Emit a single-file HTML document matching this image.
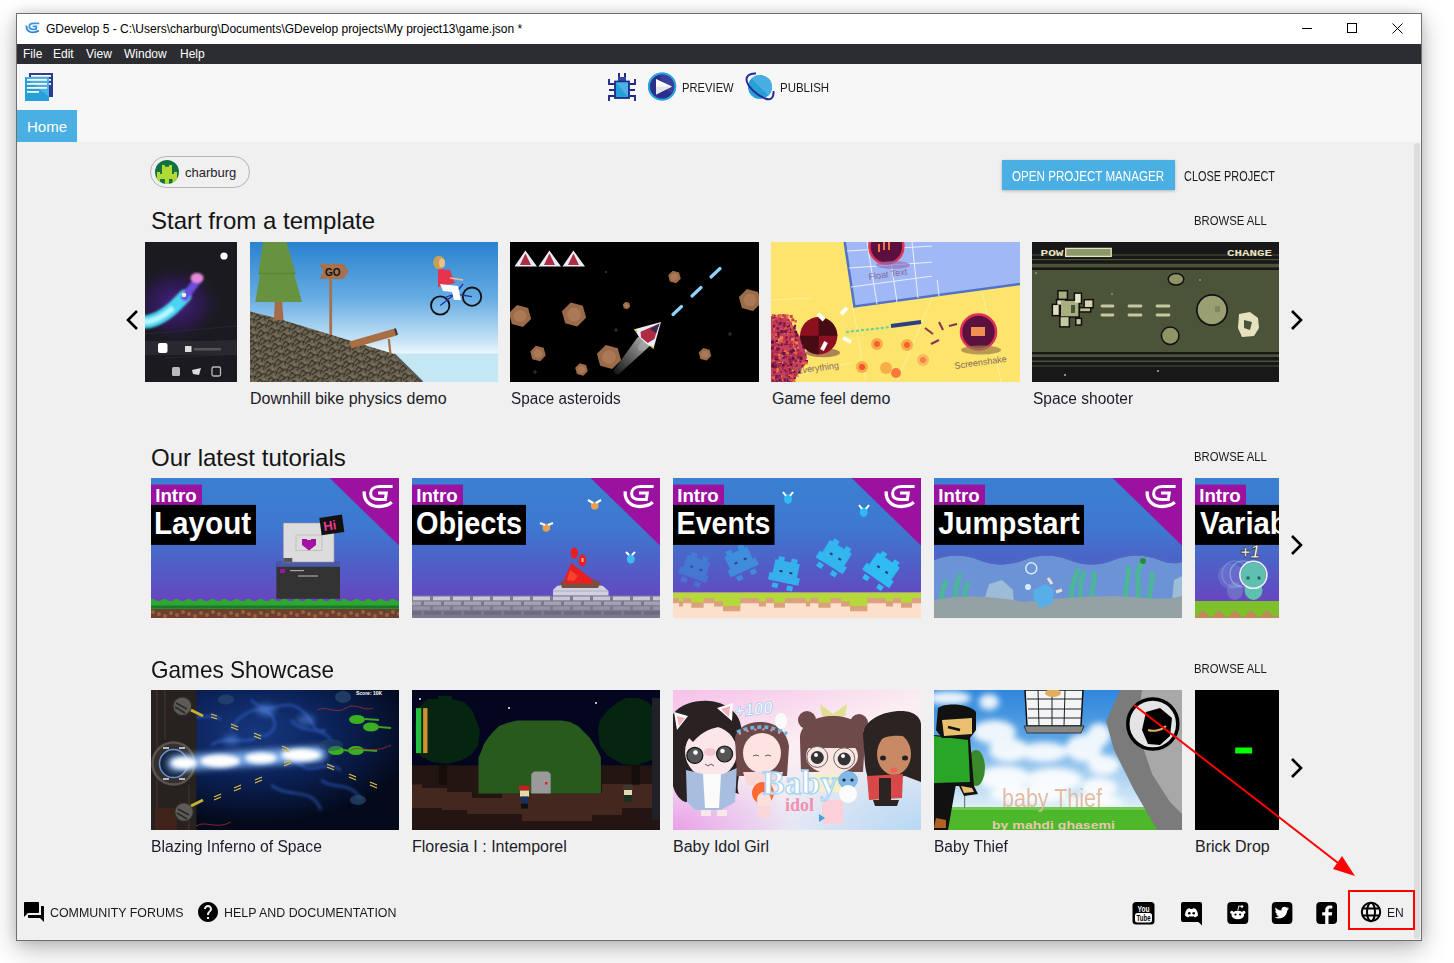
<!DOCTYPE html>
<html><head><meta charset="utf-8">
<style>
*{box-sizing:border-box}
html,body{margin:0;padding:0}
body{width:1454px;height:963px;overflow:hidden;background:#fff;position:relative;font-family:"Liberation Sans",sans-serif;color:#1e1e1e}
.a{position:absolute}
.t{position:absolute;white-space:nowrap;line-height:1}
#win{left:16px;top:13px;width:1406px;height:928px;border:1px solid #707070;background:#f0f0f0;box-shadow:0 8px 24px rgba(0,0,0,0.28),0 0 10px rgba(0,0,0,0.12)}
.card{position:absolute;width:249px;height:140px;overflow:hidden}
.card svg{display:block}
.lbl{position:absolute;font-size:16px;color:#1c1c28;white-space:nowrap;line-height:1}
.h2{position:absolute;font-size:24px;color:#141414;white-space:nowrap;line-height:1}
.ba{position:absolute;font-size:13px;color:#1a1a1a;white-space:nowrap;line-height:1;transform-origin:0 0}
.chev{position:absolute;width:14px;height:20px}
</style></head><body>
<div id="win" class="a"></div>
<!-- title bar -->
<div class="a" style="left:17px;top:14px;width:1404px;height:30px;background:#fff"></div>
<div class="a" style="left:17px;top:44px;width:1404px;height:20px;background:#2b2d31"></div>
<div class="a" style="left:17px;top:64px;width:1404px;height:78px;background:#f7f7f7"></div>

<!-- title -->
<svg class="a" style="left:0;top:0" width="60" height="60" viewBox="0 0 60 60"><g transform="translate(-69.5 19.6) scale(0.45)">
<path d="M213.2 13.3 C212.5 22.5 218.5 28.5 228 28.5 C233.5 28.5 237.5 27 240.8 24.3" fill="none" stroke="#2f86dc" stroke-width="4.2"/>
<path d="M241.6 8.6 H228.5 C222.5 8.6 219.6 12 219.6 15.6 C219.6 19.6 222.6 21.6 228 21.6 H234.3 L235.3 14.9 H227" fill="none" stroke="#3b93e0" stroke-width="4"/></g></svg>
<div class="t" style="left:46px;top:23px;font-size:12px;color:#000">GDevelop 5 - C:\Users\charburg\Documents\GDevelop projects\My project13\game.json *</div>
<div class="a" style="left:1302px;top:28px;width:10px;height:1px;background:#000"></div>
<div class="a" style="left:1347px;top:23px;width:10px;height:10px;border:1px solid #000"></div>
<svg class="a" style="left:1392px;top:23px" width="11" height="11" viewBox="0 0 11 11"><path d="M0.5 0.5 L10.5 10.5 M10.5 0.5 L0.5 10.5" stroke="#000" stroke-width="1"/></svg>
<!-- menu -->
<div class="t" style="left:23px;top:48px;font-size:12px;color:#fff">File</div>
<div class="t" style="left:53px;top:48px;font-size:12px;color:#fff">Edit</div>
<div class="t" style="left:86px;top:48px;font-size:12px;color:#fff">View</div>
<div class="t" style="left:124px;top:48px;font-size:12px;color:#fff">Window</div>
<div class="t" style="left:180px;top:48px;font-size:12px;color:#fff">Help</div>

<!-- toolbar -->
<svg class="a" style="left:24px;top:72px" width="30" height="30" viewBox="0 0 30 30">
<rect x="5" y="1" width="24" height="24" fill="#2e3b93"/>
<rect x="7" y="3" width="20" height="1.8" fill="#fff"/><rect x="7" y="7" width="20" height="1.8" fill="#fff"/><rect x="7" y="11" width="20" height="1.8" fill="#fff"/>
<rect x="1" y="5" width="24" height="24" fill="#26a0d8"/>
<path d="M1 5 H25 V25 Z" fill="#45b2e6"/>
<rect x="3" y="7" width="20" height="1.8" fill="#fdf6ee"/><rect x="3" y="11" width="20" height="1.8" fill="#fdf6ee"/><rect x="3" y="15" width="20" height="1.8" fill="#fdf6ee"/><rect x="3" y="19" width="12" height="1.8" fill="#fdf6ee"/>
</svg>
<svg class="a" style="left:604px;top:68px" width="36" height="36" viewBox="604 68 36 36">
<path d="M619 73 V78 M625 73 V78" stroke="#232c8a" stroke-width="2"/>
<rect x="618" y="77" width="8" height="4.5" fill="#3a46a0"/>
<rect x="615" y="81.5" width="14" height="16.5" fill="#25a0d8" stroke="#1f2a88" stroke-width="1.8"/>
<path d="M616 82.4 H628 V97 Z" fill="#4bb1e4"/>
<path d="M609 79 V84 H614.5 M609 90 H614.5 M609 101 V96 H614.5 M635 79 V84 H629.5 M635 90 H629.5 M635 101 V96 H629.5" fill="none" stroke="#1f2a88" stroke-width="1.9"/>
</svg>
<svg class="a" style="left:646px;top:70px" width="32" height="32" viewBox="646 70 32 32">
<circle cx="662.1" cy="86.5" r="13.2" fill="#2b2f8c" stroke="#2ba3de" stroke-width="1.8"/>
<path d="M660 74.5 A12 12 0 0 1 672 94 L662 86 Z" fill="#3a3e9c"/>
<circle cx="662.1" cy="86.5" r="13.2" fill="none" stroke="#2ba3de" stroke-width="1.8"/>
<path d="M656 79 L672 86.6 L656 94.4 Z" fill="#fff"/>
<path d="M656 86.6 L672 86.6 L656 94.4 Z" fill="#e4e4e4"/>
</svg>
<div class="t" style="left:682px;top:81px;font-size:13.5px;color:#1a1a1a;transform:scaleX(0.83);transform-origin:0 0">PREVIEW</div>
<svg class="a" style="left:740px;top:68px" width="40" height="36" viewBox="740 68 40 36">
<circle cx="760" cy="87" r="12" fill="#27a0d6"/>
<path d="M751.5 78.5 A12 12 0 0 1 768.5 95.5 Z" fill="#4aaee3"/>
<path d="M756 73.5 C750 73 745 76 747 82 C749 88 757 95 765 98.5 C770 100.5 774 99 773.5 91" fill="none" stroke="#25289a" stroke-width="1.9"/>
</svg>
<div class="t" style="left:780px;top:81px;font-size:13.5px;color:#1a1a1a;transform:scaleX(0.85);transform-origin:0 0">PUBLISH</div>
<!-- home tab -->
<div class="a" style="left:17px;top:110px;width:60px;height:32px;background:#4aafe3"></div>
<div class="t" style="left:27px;top:119px;font-size:15px;color:#fff">Home</div>
<!-- scrollbar thumb -->
<div class="a" style="left:1414px;top:143px;width:6px;height:795.5px;background:#dddddd;border-radius:3px"></div>

<!-- user chip -->
<div class="a" style="left:150px;top:156px;width:100px;height:32px;border:1px solid #b4b4b4;border-radius:16px"></div>
<svg class="a" style="left:155px;top:160px" width="24" height="24" viewBox="0 0 24 24"><defs><clipPath id="avc"><circle cx="12" cy="12" r="12"/></clipPath></defs>
<circle cx="12" cy="12" r="12" fill="#137244"/>
<path clip-path="url(#avc)" d="M7 5.1 H9.9 V6.7 H14 V5.1 H17 V14 H19 V12 H22 V24 H17.5 V19.1 H14 V24 H9.9 V19.1 H5.1 V24 H2 V12 H5.1 V14 H7 Z" fill="#b3d935"/>
</svg>
<div class="t" style="left:185px;top:166px;font-size:13px;color:#1e1e2a">charburg</div>
<!-- buttons -->
<div class="a" style="left:1002px;top:160px;width:173px;height:30px;background:#4aafe3;box-shadow:0 1px 3px rgba(0,0,0,0.25)"></div>
<div class="t" style="left:1012px;top:169px;font-size:14px;color:#fff;transform:scaleX(0.83);transform-origin:0 0">OPEN PROJECT MANAGER</div>
<div class="t" style="left:1184px;top:169px;font-size:14px;color:#1a1a1a;transform:scaleX(0.78);transform-origin:0 0">CLOSE PROJECT</div>
<!-- headings -->
<div class="h2" style="left:151px;top:209px">Start from a template</div>
<div class="ba" style="left:1194px;top:214px;transform:scaleX(0.87)">BROWSE ALL</div>
<div class="h2" style="left:151px;top:446px">Our latest tutorials</div>
<div class="ba" style="left:1194px;top:450px;transform:scaleX(0.87)">BROWSE ALL</div>
<div class="h2" style="left:151px;top:658px;transform:scaleX(0.94);transform-origin:0 0">Games Showcase</div>
<div class="ba" style="left:1194px;top:662px;transform:scaleX(0.87)">BROWSE ALL</div>
<!--CARDS-->
<svg class="a" style="left:145px;top:242px;background:#000" width="92" height="140" viewBox="0 0 92 140"><defs><radialGradient id="pglow" cx="0.5" cy="0.5" r="0.5"><stop offset="0" stop-color="#4a2290" stop-opacity="0.95"/><stop offset="0.6" stop-color="#33185e" stop-opacity="0.6"/><stop offset="1" stop-color="#1c1b22" stop-opacity="0"/></radialGradient>
<filter id="pb" filterUnits="userSpaceOnUse" x="-10" y="-10" width="120" height="160"><feGaussianBlur stdDeviation="1.3"/></filter></defs>
<rect width="92" height="140" fill="#1b1a21"/>
<ellipse cx="30" cy="62" rx="48" ry="40" fill="url(#pglow)"/>
<path d="M0 92 L92 84 M0 104 L92 98 M20 116 L92 112" stroke="#2e2d36" stroke-width="0.7"/>
<g filter="url(#pb)">
<path d="M-2 80 C10 80 20 73 28 66 C32 62 36 58 40 54" fill="none" stroke="#48d6f2" stroke-width="13" stroke-linecap="round"/>
<path d="M-2 80 C10 80 20 73 28 66" fill="none" stroke="#b8f6ff" stroke-width="5"/>
<path d="M40 55 C45 48 49 42 54 37" fill="none" stroke="#6c4ee0" stroke-width="8" stroke-linecap="round"/>
<ellipse cx="52" cy="36" rx="6.5" ry="5" fill="#e888d8"/>
</g>
<circle cx="39" cy="53" r="2.3" fill="#eee"/>
<circle cx="79" cy="14" r="3.6" fill="#fff"/>
<rect x="0" y="99" width="92" height="14" fill="#2b2b33" opacity="0.85"/>
<rect x="13" y="101" width="9.5" height="10" rx="2" fill="#fff"/>
<rect x="40" y="104" width="6.5" height="6" fill="#ddd"/>
<rect x="49" y="106" width="27" height="2.5" fill="#555"/>
<rect x="27" y="125" width="8" height="9" rx="1.5" fill="#bbb"/>
<path d="M47 128 L56 126 L54 133 L48 132 Z" fill="#ddd"/>
<rect x="67" y="125" width="8.5" height="9" rx="1.5" fill="none" stroke="#bbb" stroke-width="1.3"/>
</svg>
<svg class="a" style="left:250px;top:242px;background:#000" width="248" height="140" viewBox="0 0 248 140"><defs><linearGradient id="sky1" x1="0" y1="0" x2="0" y2="1"><stop offset="0" stop-color="#2a82cf"/><stop offset="0.4" stop-color="#66ace3"/><stop offset="0.7" stop-color="#c4e2f6"/><stop offset="0.8" stop-color="#eef7fc"/></linearGradient>
<pattern id="rock" width="11" height="8" patternUnits="userSpaceOnUse" patternTransform="rotate(-12)"><rect width="11" height="8" fill="#6e6653"/><path d="M0 7 C2 5 4 6 6 4 C8 3 9 5 11 4 M3 0 C3.5 1.5 4.5 2.5 6 4 M9 8 C8.5 7 9 6 11 4 M0 3 C1 2 2 2 3 0" stroke="#2f2a22" stroke-width="1.1" fill="none"/><circle cx="7" cy="1.5" r="0.8" fill="#8a8466"/></pattern></defs>
<rect width="248" height="140" fill="url(#sky1)"/>
<rect x="140" y="111.5" width="108" height="28.5" fill="#c3e7f3"/>
<path d="M0 69.5 L26 76 L144 112 L172.5 140 L0 140 Z" fill="url(#rock)"/>
<path d="M144 112 L172.5 140" stroke="#5a5a5a" stroke-width="1.8"/>
<path d="M25 57 H32 L33.5 78 H23.8 Z" fill="#a46d48"/>
<path d="M13 0 H36.5 L45.5 31.5 H8.5 Z" fill="#679340"/>
<path d="M10.5 30 H43.5 L52 60 H5.2 Z" fill="#679340"/>
<path d="M8.5 31.5 H45.5" stroke="#5a8538" stroke-width="1.5"/>
<rect x="79.3" y="36" width="2.8" height="57" fill="#a5714f"/>
<path d="M69.5 21.8 H93.5 L98.8 29.3 L93.5 36.9 H69.5 L73 29.3 Z" fill="#a5714f"/>
<text x="75" y="34" font-family="Liberation Sans" font-weight="700" font-size="10" fill="#111">GO</text>
<path d="M100.5 103 L145.8 90" stroke="#a86f45" stroke-width="7.5"/>
<path d="M145 86.5 L147 93" stroke="#333" stroke-width="2"/>
<path d="M138.8 97 L140.6 113" stroke="#a86f45" stroke-width="2.2"/>
<circle cx="190.2" cy="63.5" r="9.2" fill="none" stroke="#111" stroke-width="1.8"/>
<circle cx="222" cy="54.7" r="9.2" fill="none" stroke="#111" stroke-width="1.8"/>
<path d="M190.2 63.5 L205 52 L222 54.7 M205 52 L213 42 M196 55 L205 52" stroke="#2430a0" stroke-width="1.3" fill="none"/>
<path d="M188 27 L200 28 L205 41 L188 45 Z" fill="#e8334f"/>
<path d="M190 42 L208 44 L211 58 L204 58 L202 50 L193 49 Z" fill="#fff"/>
<ellipse cx="189" cy="20.5" rx="5.8" ry="6.8" fill="#c9a155"/>
<ellipse cx="192" cy="21" rx="3" ry="4.5" fill="#e8c090"/>
<path d="M200 36 L213 38" stroke="#e8c090" stroke-width="1.6"/>
</svg>
<svg class="a" style="left:510px;top:242px;background:#000" width="249" height="140" viewBox="0 0 249 140"><rect width="249" height="140" fill="#000"/><path d="M4.5 24.5 L15.4 8.5 L27 24.5 Z" fill="#e8eef4"/><path d="M10 23 L15.4 11.5 L21 23 Z" fill="#b02c44"/><path d="M28.5 24.5 L39.4 8.5 L51 24.5 Z" fill="#e8eef4"/><path d="M34 23 L39.4 11.5 L45 23 Z" fill="#b02c44"/><path d="M52.5 24.5 L63.4 8.5 L75 24.5 Z" fill="#e8eef4"/><path d="M58 23 L63.4 11.5 L69 23 Z" fill="#b02c44"/><polygon points="21.1,77.0 13.0,85.1 1.9,82.1 -1.1,71.0 7.0,62.9 18.1,65.9" fill="#9b6a48"/><circle cx="10" cy="74" r="6.3" fill="#a97a55"/><polygon points="76.1,75.7 67.2,84.6 55.2,81.3 51.9,69.3 60.8,60.4 72.8,63.7" fill="#9b6a48"/><circle cx="64" cy="72.5" r="6.9" fill="#a97a55"/><polygon points="35.7,113.6 30.1,119.2 22.3,117.2 20.3,109.4 25.9,103.8 33.7,105.8" fill="#9b6a48"/><circle cx="28" cy="111.5" r="4.4" fill="#a97a55"/><polygon points="77.8,129.2 73.2,133.8 66.9,132.1 65.2,125.8 69.8,121.2 76.1,122.9" fill="#9b6a48"/><circle cx="71.5" cy="127.5" r="3.6" fill="#a97a55"/><polygon points="111.1,118.2 102.2,127.1 90.2,123.8 86.9,111.8 95.8,102.9 107.8,106.2" fill="#9b6a48"/><circle cx="99" cy="115" r="6.9" fill="#a97a55"/><polygon points="120.2,64.5 117.5,67.2 113.8,66.2 112.8,62.5 115.5,59.8 119.2,60.8" fill="#9b6a48"/><circle cx="116.5" cy="63.5" r="2.1" fill="#a97a55"/><polygon points="170.8,36.7 166.2,41.3 159.9,39.6 158.2,33.3 162.8,28.7 169.1,30.4" fill="#9b6a48"/><circle cx="164.5" cy="35" r="3.6" fill="#a97a55"/><polygon points="251.1,61.0 243.0,69.1 231.9,66.1 228.9,55.0 237.0,46.9 248.1,49.9" fill="#9b6a48"/><circle cx="240" cy="58" r="6.3" fill="#a97a55"/><polygon points="201.3,114.0 196.7,118.6 190.4,116.9 188.7,110.6 193.3,106.0 199.6,107.7" fill="#9b6a48"/><circle cx="195" cy="112.3" r="3.6" fill="#a97a55"/><path d="M163 72.5 L171.5 64.5 M182 54 L191 45.5 M201 35 L210 26.5" stroke="#8fd2ff" stroke-width="3.2" stroke-linecap="round"/>
<defs><linearGradient id="exh" x1="1" y1="0" x2="0" y2="1"><stop offset="0" stop-color="#bbb"/><stop offset="1" stop-color="#111"/></linearGradient></defs>
<path d="M127 96 C131 92 138 96 141 103 L110 131 C107 134 103 131 104 128 Z" fill="url(#exh)"/>
<ellipse cx="133" cy="104" rx="4" ry="6" transform="rotate(45 133 104)" fill="#aaa" opacity="0.6"/>
<path d="M124.4 87.3 L150.9 80 L143.6 106.5 L136 101.5 L129 95 Z" fill="#e8eef6"/>
<path d="M130.5 89.8 L149.5 81.5 L144.4 97.1 L137.8 101 L131 95.5 Z" fill="#b02a44"/>
<path d="M140 87 L149.5 81.5 L146 91 Z" fill="#2a3050"/>
<path d="M124.4 87.3 L127 90 M143.6 106.5 L141 104" stroke="#f0b020" stroke-width="1.5"/>
<path d="M95 30 h2 M96 29 v2 M104 88 h4 M106 86 v4 M23 130 h4 M25 128 v4 M218 92 h4 M220 90 v4" stroke="#444" stroke-width="0.8"/>
</svg>
<svg class="a" style="left:771px;top:242px;background:#000" width="249" height="140" viewBox="0 0 249 140"><rect width="249" height="140" fill="#fde46c"/>
<path d="M0 58 L40 56 M0 140 L83 120 M80 64 L249 42 M126 140 L166 44 M230 140 L210 44 M82 66 L95 140" stroke="#fff3b0" stroke-width="1" opacity="0.7"/>
<path d="M73.7 0 H249 V42 L83.4 64.4 Z" fill="#a0b8f6"/>
<path d="M73.7 0 L83.4 64.4 L249 42" fill="none" stroke="#5272c8" stroke-width="2.5"/>
<path d="M76 9 L249 -1 M78 26 L249 14 M80 45 L162 34 M96 0 L106 62 M117 0 L126 60 M141 0 L147 56 M162 0 L168 54 M247 0 L250 42" stroke="#e8f0ff" stroke-width="1"/>
<rect x="161" y="0" width="90" height="38" fill="#a0b8f6"/>
<circle cx="115.4" cy="4.5" r="17" fill="#5b1040" stroke="#e23554" stroke-width="2.5"/>
<path d="M108 2 V10 M113 0 V8 M118 0 V8" stroke="#f07840" stroke-width="2"/>
<ellipse cx="122" cy="23" rx="17" ry="4" fill="#8a68b0" opacity="0.6"/>
<text x="98" y="38" font-family="Liberation Sans" font-size="9" fill="#8a6890" transform="rotate(-8 98 38)">Float Text</text>
<path d="M0 74 L14 76 L24 86 L32 100 L36 116 L30 128 L22 140 L0 140 Z" fill="#c4405a"/><rect x="13.0" y="82.3" width="1.5" height="1.5" fill="#b02a50"/><rect x="14.6" y="75.9" width="1.5" height="1.5" fill="#b02a50"/><rect x="17.0" y="128.2" width="2" height="2" fill="#d03a4a"/><rect x="23.1" y="99.0" width="1.5" height="1.5" fill="#6a1a50"/><rect x="11.6" y="81.8" width="2.5" height="2.5" fill="#6a1a50"/><rect x="4.1" y="110.8" width="1.5" height="1.5" fill="#b02a50"/><rect x="22.6" y="114.1" width="3" height="3" fill="#c84060"/><rect x="18.6" y="134.8" width="2" height="2" fill="#6a1a50"/><rect x="21.0" y="131.5" width="2.5" height="2.5" fill="#b02a50"/><rect x="4.7" y="100.4" width="2" height="2" fill="#5a1040"/><rect x="16.9" y="137.4" width="2.5" height="2.5" fill="#c84060"/><rect x="27.8" y="112.4" width="3" height="3" fill="#b02a50"/><rect x="11.4" y="98.2" width="1.5" height="1.5" fill="#5a1040"/><rect x="14.2" y="113.5" width="2" height="2" fill="#8a2050"/><rect x="5.2" y="88.8" width="3" height="3" fill="#b02a50"/><rect x="6.7" y="99.3" width="2" height="2" fill="#f08050"/><rect x="14.4" y="132.1" width="2" height="2" fill="#b02a50"/><rect x="7.0" y="87.8" width="3" height="3" fill="#6a1a50"/><rect x="10.5" y="72.3" width="2.5" height="2.5" fill="#c84060"/><rect x="24.7" y="118.0" width="3" height="3" fill="#f08050"/><rect x="16.0" y="79.0" width="1.5" height="1.5" fill="#e86040"/><rect x="2.7" y="86.2" width="2.5" height="2.5" fill="#d03a4a"/><rect x="4.1" y="110.5" width="2.5" height="2.5" fill="#d03a4a"/><rect x="2.8" y="86.1" width="2.5" height="2.5" fill="#c84060"/><rect x="24.1" y="104.2" width="3" height="3" fill="#5a1040"/><rect x="19.2" y="93.2" width="2.5" height="2.5" fill="#8a2050"/><rect x="19.1" y="119.1" width="2" height="2" fill="#c84060"/><rect x="5.9" y="108.9" width="2.5" height="2.5" fill="#b02a50"/><rect x="6.7" y="124.5" width="2.5" height="2.5" fill="#e86040"/><rect x="24.5" y="125.6" width="2" height="2" fill="#e86040"/><rect x="20.7" y="96.2" width="1.5" height="1.5" fill="#8a2050"/><rect x="18.9" y="85.2" width="2.5" height="2.5" fill="#5a1040"/><rect x="18.8" y="95.0" width="1.5" height="1.5" fill="#5a1040"/><rect x="17.4" y="115.2" width="3" height="3" fill="#5a1040"/><rect x="16.1" y="136.4" width="2" height="2" fill="#6a1a50"/><rect x="1.1" y="112.2" width="2" height="2" fill="#5a1040"/><rect x="26.3" y="95.8" width="2" height="2" fill="#d03a4a"/><rect x="0.6" y="138.0" width="2" height="2" fill="#f08050"/><rect x="1.1" y="86.5" width="2.5" height="2.5" fill="#8a2050"/><rect x="21.8" y="128.7" width="2.5" height="2.5" fill="#5a1040"/><rect x="26.5" y="127.4" width="2" height="2" fill="#6a1a50"/><rect x="7.3" y="72.3" width="2" height="2" fill="#6a1a50"/><rect x="18.9" y="121.3" width="2.5" height="2.5" fill="#5a1040"/><rect x="9.9" y="90.8" width="3" height="3" fill="#d03a4a"/><rect x="24.5" y="106.4" width="2.5" height="2.5" fill="#5a1040"/><rect x="20.3" y="126.9" width="2" height="2" fill="#8a2050"/><rect x="17.9" y="100.3" width="2.5" height="2.5" fill="#b02a50"/><rect x="12.1" y="80.3" width="2.5" height="2.5" fill="#6a1a50"/><rect x="10.1" y="81.3" width="1.5" height="1.5" fill="#f08050"/><rect x="8.9" y="120.0" width="3" height="3" fill="#c84060"/><rect x="16.9" y="96.2" width="2.5" height="2.5" fill="#d03a4a"/><rect x="13.5" y="103.2" width="3" height="3" fill="#c84060"/><rect x="20.7" y="92.1" width="1.5" height="1.5" fill="#e86040"/><rect x="1.6" y="125.0" width="2" height="2" fill="#f08050"/><rect x="34.0" y="118.0" width="3" height="3" fill="#6a1a50"/><rect x="21.5" y="107.0" width="2.5" height="2.5" fill="#b02a50"/><rect x="11.2" y="126.4" width="1.5" height="1.5" fill="#8a2050"/><rect x="3.3" y="130.2" width="1.5" height="1.5" fill="#5a1040"/><rect x="0.5" y="139.6" width="2.5" height="2.5" fill="#6a1a50"/><rect x="1.7" y="120.2" width="2" height="2" fill="#8a2050"/><rect x="2.0" y="85.7" width="2.5" height="2.5" fill="#e86040"/><rect x="11.6" y="106.0" width="2.5" height="2.5" fill="#d03a4a"/><rect x="20.2" y="138.5" width="2" height="2" fill="#5a1040"/><rect x="4.3" y="127.7" width="3" height="3" fill="#f08050"/><rect x="9.2" y="85.5" width="2" height="2" fill="#f08050"/><rect x="0.6" y="114.5" width="3" height="3" fill="#6a1a50"/><rect x="2.2" y="117.2" width="2.5" height="2.5" fill="#e86040"/><rect x="10.8" y="72.2" width="2.5" height="2.5" fill="#c84060"/><rect x="9.8" y="137.7" width="2.5" height="2.5" fill="#6a1a50"/><rect x="0.0" y="98.0" width="2" height="2" fill="#e86040"/><rect x="3.6" y="99.2" width="1.5" height="1.5" fill="#8a2050"/><rect x="12.2" y="87.8" width="2" height="2" fill="#f08050"/><rect x="11.4" y="114.1" width="3" height="3" fill="#6a1a50"/><rect x="31.9" y="120.4" width="2" height="2" fill="#b02a50"/><rect x="1.2" y="81.1" width="1.5" height="1.5" fill="#f08050"/><rect x="25.0" y="118.3" width="1.5" height="1.5" fill="#5a1040"/><rect x="21.4" y="116.8" width="3" height="3" fill="#8a2050"/><rect x="18.4" y="129.5" width="2.5" height="2.5" fill="#d03a4a"/><rect x="24.7" y="115.7" width="2" height="2" fill="#c84060"/><rect x="10.2" y="122.5" width="2" height="2" fill="#d03a4a"/><rect x="19.3" y="105.0" width="1.5" height="1.5" fill="#e86040"/><rect x="18.6" y="103.7" width="2" height="2" fill="#8a2050"/><rect x="18.4" y="127.8" width="3" height="3" fill="#8a2050"/><rect x="15.5" y="134.3" width="1.5" height="1.5" fill="#b02a50"/><rect x="5.7" y="107.6" width="2" height="2" fill="#8a2050"/><rect x="0.1" y="105.4" width="2.5" height="2.5" fill="#6a1a50"/><rect x="16.6" y="97.6" width="2.5" height="2.5" fill="#d03a4a"/><rect x="13.0" y="95.0" width="2" height="2" fill="#d03a4a"/><rect x="15.7" y="139.9" width="2.5" height="2.5" fill="#f08050"/><rect x="2.1" y="117.0" width="2" height="2" fill="#e86040"/><rect x="1.2" y="123.8" width="2" height="2" fill="#b02a50"/><rect x="2.0" y="121.8" width="2" height="2" fill="#8a2050"/><rect x="19.4" y="134.0" width="2" height="2" fill="#5a1040"/><rect x="16.6" y="91.2" width="2.5" height="2.5" fill="#f08050"/><rect x="15.8" y="83.4" width="2" height="2" fill="#5a1040"/><rect x="22.0" y="102.8" width="3" height="3" fill="#f08050"/><rect x="5.6" y="85.1" width="2.5" height="2.5" fill="#b02a50"/><rect x="12.8" y="97.0" width="2" height="2" fill="#d03a4a"/><rect x="21.0" y="97.6" width="1.5" height="1.5" fill="#5a1040"/><rect x="11.1" y="137.8" width="2" height="2" fill="#b02a50"/><rect x="10.8" y="88.9" width="3" height="3" fill="#f08050"/><rect x="0.9" y="74.2" width="3" height="3" fill="#5a1040"/><rect x="0.0" y="98.6" width="3" height="3" fill="#5a1040"/><rect x="9.9" y="79.4" width="1.5" height="1.5" fill="#5a1040"/><rect x="3.4" y="124.8" width="2" height="2" fill="#e86040"/><rect x="17.5" y="123.9" width="2.5" height="2.5" fill="#e86040"/><rect x="15.5" y="87.2" width="1.5" height="1.5" fill="#8a2050"/><rect x="9.1" y="100.9" width="3" height="3" fill="#d03a4a"/><rect x="27.8" y="120.8" width="3" height="3" fill="#e86040"/><rect x="0.3" y="91.9" width="1.5" height="1.5" fill="#e86040"/><rect x="19.8" y="85.6" width="2" height="2" fill="#e86040"/><rect x="18.6" y="90.0" width="1.5" height="1.5" fill="#5a1040"/><rect x="23.8" y="100.2" width="2" height="2" fill="#f08050"/><rect x="18.0" y="120.4" width="1.5" height="1.5" fill="#b02a50"/><rect x="13.3" y="83.5" width="2.5" height="2.5" fill="#b02a50"/><rect x="14.1" y="137.0" width="2" height="2" fill="#f08050"/><rect x="14.3" y="127.9" width="3" height="3" fill="#b02a50"/><rect x="2.0" y="104.2" width="3" height="3" fill="#e86040"/><rect x="12.9" y="122.1" width="3" height="3" fill="#e86040"/><rect x="1.4" y="76.3" width="2.5" height="2.5" fill="#e86040"/><rect x="10.9" y="137.1" width="2.5" height="2.5" fill="#c84060"/><rect x="23.8" y="126.8" width="1.5" height="1.5" fill="#d03a4a"/><rect x="18.6" y="124.8" width="3" height="3" fill="#5a1040"/><rect x="5.3" y="105.8" width="2.5" height="2.5" fill="#6a1a50"/><rect x="24.3" y="94.3" width="2.5" height="2.5" fill="#b02a50"/><rect x="20.5" y="98.6" width="3" height="3" fill="#b02a50"/><rect x="26.0" y="104.8" width="2" height="2" fill="#f08050"/><rect x="3.4" y="78.6" width="3" height="3" fill="#6a1a50"/><rect x="9.4" y="100.3" width="2" height="2" fill="#b02a50"/><rect x="10.7" y="89.3" width="3" height="3" fill="#e86040"/><rect x="7.4" y="88.0" width="2" height="2" fill="#c84060"/><rect x="2.6" y="89.1" width="2" height="2" fill="#b02a50"/><rect x="19.0" y="127.7" width="2.5" height="2.5" fill="#d03a4a"/><rect x="3.0" y="106.9" width="2.5" height="2.5" fill="#d03a4a"/><rect x="4.2" y="112.5" width="2" height="2" fill="#d03a4a"/><rect x="14.7" y="81.6" width="2.5" height="2.5" fill="#d03a4a"/><rect x="24.0" y="116.3" width="1.5" height="1.5" fill="#c84060"/><rect x="16.4" y="97.3" width="1.5" height="1.5" fill="#e86040"/><rect x="1.3" y="105.7" width="3" height="3" fill="#b02a50"/><rect x="21.4" y="116.4" width="2.5" height="2.5" fill="#f08050"/><rect x="2.1" y="122.7" width="3" height="3" fill="#f08050"/><rect x="0.7" y="124.1" width="2" height="2" fill="#f08050"/><rect x="16.2" y="132.0" width="2" height="2" fill="#6a1a50"/><rect x="0.6" y="109.5" width="3" height="3" fill="#b02a50"/><rect x="22.9" y="135.1" width="2" height="2" fill="#6a1a50"/><rect x="13.9" y="83.0" width="1.5" height="1.5" fill="#b02a50"/><rect x="15.3" y="123.2" width="2" height="2" fill="#8a2050"/><rect x="5.1" y="136.1" width="3" height="3" fill="#c84060"/><rect x="2.1" y="135.0" width="2" height="2" fill="#e86040"/><rect x="24.8" y="113.8" width="3" height="3" fill="#6a1a50"/><rect x="6.3" y="96.4" width="2" height="2" fill="#d03a4a"/><rect x="18.2" y="129.7" width="3" height="3" fill="#8a2050"/><rect x="23.3" y="101.0" width="3" height="3" fill="#5a1040"/><rect x="7.2" y="72.2" width="3" height="3" fill="#e86040"/><rect x="17.9" y="114.1" width="2" height="2" fill="#5a1040"/><rect x="16.0" y="76.6" width="2.5" height="2.5" fill="#b02a50"/><rect x="1.6" y="80.9" width="2.5" height="2.5" fill="#b02a50"/><rect x="2.2" y="106.3" width="2" height="2" fill="#d03a4a"/><rect x="19.7" y="137.1" width="2" height="2" fill="#e86040"/><rect x="2.6" y="95.9" width="2" height="2" fill="#c84060"/><rect x="5.7" y="106.2" width="2" height="2" fill="#8a2050"/><rect x="8.0" y="99.4" width="2.5" height="2.5" fill="#c84060"/><rect x="4.6" y="108.1" width="2.5" height="2.5" fill="#5a1040"/><rect x="22.2" y="111.4" width="1.5" height="1.5" fill="#8a2050"/><rect x="23.1" y="96.5" width="3" height="3" fill="#e86040"/><rect x="7.1" y="122.6" width="2.5" height="2.5" fill="#8a2050"/><rect x="1.4" y="82.2" width="3" height="3" fill="#f08050"/><rect x="20.5" y="132.9" width="2" height="2" fill="#d03a4a"/><rect x="0.9" y="72.2" width="1.5" height="1.5" fill="#c84060"/><rect x="21.4" y="100.1" width="2" height="2" fill="#e86040"/><rect x="14.6" y="128.3" width="1.5" height="1.5" fill="#e86040"/><rect x="5.8" y="117.3" width="2.5" height="2.5" fill="#d03a4a"/><rect x="2.2" y="127.8" width="3" height="3" fill="#5a1040"/><rect x="9.9" y="133.4" width="1.5" height="1.5" fill="#f08050"/><rect x="7.4" y="82.8" width="1.5" height="1.5" fill="#d03a4a"/><rect x="24.5" y="116.7" width="3" height="3" fill="#e86040"/><rect x="20.7" y="115.7" width="3" height="3" fill="#6a1a50"/><rect x="20.3" y="76.3" width="3" height="3" fill="#d03a4a"/><rect x="15.0" y="101.7" width="1.5" height="1.5" fill="#5a1040"/><rect x="7.0" y="139.8" width="1.5" height="1.5" fill="#b02a50"/><rect x="13.4" y="123.0" width="2.5" height="2.5" fill="#d03a4a"/><rect x="10.6" y="109.7" width="2.5" height="2.5" fill="#8a2050"/><rect x="9.4" y="122.6" width="2.5" height="2.5" fill="#e86040"/><rect x="33.6" y="119.4" width="3" height="3" fill="#e86040"/><rect x="22.8" y="92.9" width="1.5" height="1.5" fill="#6a1a50"/><rect x="5.8" y="73.8" width="2" height="2" fill="#c84060"/><rect x="5.5" y="115.8" width="1.5" height="1.5" fill="#d03a4a"/><rect x="2.6" y="112.2" width="1.5" height="1.5" fill="#f08050"/><rect x="4.3" y="86.0" width="1.5" height="1.5" fill="#b02a50"/><rect x="4.0" y="78.7" width="2" height="2" fill="#8a2050"/><rect x="12.8" y="100.8" width="2.5" height="2.5" fill="#8a2050"/><rect x="1.9" y="123.7" width="3" height="3" fill="#8a2050"/><rect x="17.5" y="124.6" width="1.5" height="1.5" fill="#e86040"/><rect x="11.5" y="101.7" width="2.5" height="2.5" fill="#d03a4a"/><rect x="0.2" y="105.4" width="2" height="2" fill="#5a1040"/><rect x="23.1" y="82.8" width="2" height="2" fill="#5a1040"/><rect x="6.6" y="135.8" width="3" height="3" fill="#b02a50"/><rect x="25.1" y="96.2" width="3" height="3" fill="#b02a50"/><rect x="16.9" y="115.9" width="2.5" height="2.5" fill="#8a2050"/><rect x="17.1" y="109.1" width="2" height="2" fill="#5a1040"/><rect x="5.1" y="112.4" width="1.5" height="1.5" fill="#c84060"/><rect x="23.3" y="107.5" width="3" height="3" fill="#c84060"/><rect x="6.8" y="101.8" width="2" height="2" fill="#6a1a50"/><rect x="13.4" y="115.7" width="2" height="2" fill="#8a2050"/><rect x="12.1" y="119.8" width="2" height="2" fill="#6a1a50"/><rect x="13.9" y="88.1" width="2.5" height="2.5" fill="#b02a50"/><rect x="6.6" y="116.7" width="2" height="2" fill="#6a1a50"/><rect x="7.8" y="115.4" width="2" height="2" fill="#f08050"/><rect x="18.6" y="72.9" width="3" height="3" fill="#e86040"/><rect x="20.0" y="115.0" width="2" height="2" fill="#8a2050"/><rect x="24.1" y="99.5" width="3" height="3" fill="#f08050"/><rect x="9.1" y="84.3" width="3" height="3" fill="#c84060"/><rect x="10.4" y="119.6" width="2" height="2" fill="#f08050"/><rect x="28.5" y="114.8" width="3" height="3" fill="#5a1040"/><rect x="18.2" y="114.3" width="2" height="2" fill="#c84060"/><rect x="6.4" y="125.2" width="2.5" height="2.5" fill="#b02a50"/><rect x="19.0" y="73.1" width="2.5" height="2.5" fill="#c84060"/><rect x="16.4" y="136.5" width="2" height="2" fill="#f08050"/><rect x="20.6" y="135.4" width="2.5" height="2.5" fill="#d03a4a"/><rect x="10.1" y="98.0" width="1.5" height="1.5" fill="#f08050"/><rect x="16.0" y="136.8" width="3" height="3" fill="#5a1040"/><rect x="8.5" y="80.8" width="2" height="2" fill="#5a1040"/><rect x="25.7" y="121.0" width="2" height="2" fill="#c84060"/><rect x="26.6" y="128.5" width="3" height="3" fill="#5a1040"/><rect x="31.2" y="103.9" width="2" height="2" fill="#8a2050"/><rect x="28.2" y="118.7" width="2" height="2" fill="#5a1040"/><rect x="0.1" y="121.1" width="2" height="2" fill="#8a2050"/><rect x="12.8" y="105.0" width="1.5" height="1.5" fill="#c84060"/><rect x="6.1" y="92.6" width="1.5" height="1.5" fill="#c84060"/><rect x="4.1" y="81.7" width="3" height="3" fill="#c84060"/><rect x="21.4" y="113.4" width="1.5" height="1.5" fill="#8a2050"/><rect x="7.9" y="119.1" width="3" height="3" fill="#b02a50"/><rect x="5.6" y="105.5" width="3" height="3" fill="#6a1a50"/><rect x="24.0" y="122.0" width="2.5" height="2.5" fill="#5a1040"/><rect x="27.8" y="105.8" width="3" height="3" fill="#c84060"/><rect x="17.0" y="140.0" width="2" height="2" fill="#c84060"/><rect x="25.0" y="95.0" width="2.5" height="2.5" fill="#c84060"/><rect x="19.0" y="107.7" width="2" height="2" fill="#8a2050"/><rect x="17.4" y="100.7" width="2.5" height="2.5" fill="#8a2050"/><rect x="14.2" y="105.6" width="2.5" height="2.5" fill="#c84060"/><rect x="13.2" y="93.6" width="1.5" height="1.5" fill="#d03a4a"/><rect x="16.0" y="109.7" width="1.5" height="1.5" fill="#f08050"/><rect x="12.0" y="72.4" width="3" height="3" fill="#d03a4a"/><rect x="24.7" y="114.6" width="1.5" height="1.5" fill="#e86040"/><rect x="1.6" y="115.1" width="2" height="2" fill="#b02a50"/><rect x="4.0" y="135.3" width="2" height="2" fill="#8a2050"/><rect x="22.5" y="89.5" width="3" height="3" fill="#d03a4a"/><rect x="12.7" y="101.3" width="1.5" height="1.5" fill="#5a1040"/><rect x="32.4" y="111.1" width="3" height="3" fill="#b02a50"/><rect x="0.6" y="98.3" width="2" height="2" fill="#5a1040"/><rect x="18.9" y="132.9" width="3" height="3" fill="#d03a4a"/><rect x="0.4" y="117.5" width="1.5" height="1.5" fill="#e86040"/><rect x="7.5" y="75.4" width="2" height="2" fill="#b02a50"/><rect x="11.7" y="109.9" width="2.5" height="2.5" fill="#d03a4a"/><rect x="12.4" y="121.6" width="3" height="3" fill="#d03a4a"/><rect x="12.7" y="136.5" width="3" height="3" fill="#6a1a50"/><rect x="5.8" y="126.2" width="2" height="2" fill="#f08050"/><rect x="19.1" y="124.9" width="2.5" height="2.5" fill="#c84060"/><rect x="11.7" y="76.1" width="2.5" height="2.5" fill="#d03a4a"/><rect x="17.1" y="132.4" width="3" height="3" fill="#e86040"/><rect x="10.5" y="100.7" width="1.5" height="1.5" fill="#8a2050"/><rect x="22.9" y="90.6" width="3" height="3" fill="#c84060"/><rect x="21.4" y="108.7" width="3" height="3" fill="#e86040"/><rect x="31.5" y="121.1" width="2.5" height="2.5" fill="#d03a4a"/><rect x="10.2" y="123.1" width="3" height="3" fill="#b02a50"/><rect x="21.4" y="96.1" width="3" height="3" fill="#8a2050"/><rect x="7.2" y="119.7" width="2.5" height="2.5" fill="#f08050"/><rect x="14.9" y="103.5" width="2.5" height="2.5" fill="#d03a4a"/><rect x="13.8" y="107.3" width="1.5" height="1.5" fill="#e86040"/><rect x="22.7" y="89.8" width="3" height="3" fill="#b02a50"/><rect x="8.0" y="84.3" width="1.5" height="1.5" fill="#d03a4a"/><rect x="22.3" y="131.2" width="1.5" height="1.5" fill="#f08050"/><rect x="12.7" y="87.9" width="3" height="3" fill="#6a1a50"/><rect x="17.9" y="82.9" width="2" height="2" fill="#6a1a50"/><rect x="1.5" y="89.4" width="1.5" height="1.5" fill="#d03a4a"/><rect x="10.3" y="106.9" width="3" height="3" fill="#d03a4a"/><rect x="4.0" y="93.6" width="2" height="2" fill="#8a2050"/><rect x="23.6" y="102.0" width="3" height="3" fill="#c84060"/><rect x="14.9" y="98.5" width="3" height="3" fill="#6a1a50"/><rect x="17.7" y="126.9" width="1.5" height="1.5" fill="#5a1040"/><rect x="17.9" y="78.6" width="1.5" height="1.5" fill="#b02a50"/><rect x="18.1" y="95.1" width="3" height="3" fill="#b02a50"/><rect x="2.3" y="120.5" width="2" height="2" fill="#5a1040"/><rect x="6.2" y="90.4" width="2.5" height="2.5" fill="#6a1a50"/><rect x="10.4" y="79.4" width="3" height="3" fill="#b02a50"/><rect x="6.1" y="106.9" width="2" height="2" fill="#5a1040"/><rect x="9.5" y="88.2" width="3" height="3" fill="#6a1a50"/><rect x="2.3" y="121.4" width="1.5" height="1.5" fill="#5a1040"/><rect x="0.1" y="128.6" width="2" height="2" fill="#c84060"/><rect x="17.4" y="134.0" width="2" height="2" fill="#6a1a50"/><rect x="7.0" y="112.8" width="3" height="3" fill="#8a2050"/><rect x="7.0" y="81.3" width="2" height="2" fill="#8a2050"/><rect x="8.1" y="76.5" width="3" height="3" fill="#d03a4a"/><rect x="20.7" y="95.6" width="3" height="3" fill="#b02a50"/><rect x="0.6" y="133.9" width="2.5" height="2.5" fill="#e86040"/><rect x="7.4" y="128.6" width="2" height="2" fill="#c84060"/><rect x="23.0" y="130.3" width="3" height="3" fill="#b02a50"/><rect x="4.8" y="120.6" width="2.5" height="2.5" fill="#f08050"/><rect x="4.3" y="121.7" width="1.5" height="1.5" fill="#6a1a50"/><rect x="0.8" y="137.8" width="2" height="2" fill="#6a1a50"/><rect x="4.1" y="89.0" width="1.5" height="1.5" fill="#d03a4a"/><rect x="3.9" y="119.5" width="1.5" height="1.5" fill="#5a1040"/><rect x="20.9" y="119.8" width="1.5" height="1.5" fill="#6a1a50"/><rect x="1.8" y="80.4" width="2.5" height="2.5" fill="#b02a50"/><rect x="4.9" y="99.6" width="2" height="2" fill="#e86040"/><rect x="5.9" y="111.0" width="2" height="2" fill="#d03a4a"/><rect x="9.6" y="94.8" width="2.5" height="2.5" fill="#f08050"/><rect x="16.9" y="115.0" width="2" height="2" fill="#b02a50"/><rect x="13.0" y="85.7" width="2" height="2" fill="#6a1a50"/><rect x="16.8" y="99.0" width="3" height="3" fill="#d03a4a"/><rect x="1.4" y="115.6" width="2.5" height="2.5" fill="#d03a4a"/><rect x="17.3" y="136.7" width="2.5" height="2.5" fill="#c84060"/><rect x="18.7" y="108.3" width="1.5" height="1.5" fill="#6a1a50"/><rect x="11.0" y="122.0" width="2.5" height="2.5" fill="#5a1040"/><rect x="24.4" y="110.8" width="2" height="2" fill="#c84060"/><rect x="18.4" y="109.3" width="3" height="3" fill="#8a2050"/><rect x="1.2" y="94.7" width="3" height="3" fill="#f08050"/><rect x="0.5" y="96.0" width="2" height="2" fill="#c84060"/><rect x="22.3" y="105.4" width="2" height="2" fill="#8a2050"/><rect x="2.3" y="73.5" width="2.5" height="2.5" fill="#5a1040"/><rect x="26.3" y="107.2" width="2.5" height="2.5" fill="#b02a50"/><rect x="20.8" y="139.3" width="2" height="2" fill="#f08050"/><rect x="13.5" y="96.0" width="2.5" height="2.5" fill="#b02a50"/><rect x="29.6" y="122.5" width="3" height="3" fill="#8a2050"/><rect x="31.4" y="120.2" width="2" height="2" fill="#f08050"/><rect x="23.4" y="105.9" width="2" height="2" fill="#f08050"/><rect x="4.4" y="129.9" width="2.5" height="2.5" fill="#c84060"/><rect x="11.7" y="98.6" width="3" height="3" fill="#c84060"/><rect x="0.3" y="122.7" width="3" height="3" fill="#5a1040"/><rect x="12.0" y="108.5" width="3" height="3" fill="#f08050"/><rect x="23.3" y="78.0" width="2.5" height="2.5" fill="#e86040"/><rect x="22.6" y="105.8" width="2.5" height="2.5" fill="#f08050"/><rect x="20.7" y="107.2" width="3" height="3" fill="#5a1040"/><rect x="14.3" y="112.4" width="1.5" height="1.5" fill="#b02a50"/><rect x="16.0" y="110.2" width="2" height="2" fill="#f08050"/><rect x="19.5" y="101.9" width="2.5" height="2.5" fill="#b02a50"/><rect x="6.8" y="93.6" width="2.5" height="2.5" fill="#6a1a50"/><rect x="4.4" y="132.8" width="3" height="3" fill="#6a1a50"/><rect x="21.0" y="127.5" width="2" height="2" fill="#f08050"/><rect x="7.3" y="114.8" width="2.5" height="2.5" fill="#d03a4a"/><rect x="28.4" y="109.6" width="3" height="3" fill="#b02a50"/><rect x="23.4" y="117.4" width="3" height="3" fill="#8a2050"/><rect x="5.7" y="85.5" width="2" height="2" fill="#6a1a50"/><rect x="20.7" y="106.6" width="1.5" height="1.5" fill="#6a1a50"/><rect x="17.2" y="126.4" width="2.5" height="2.5" fill="#6a1a50"/><rect x="10.7" y="78.8" width="1.5" height="1.5" fill="#c84060"/><rect x="7.7" y="114.4" width="2" height="2" fill="#f08050"/><rect x="9.7" y="83.8" width="2" height="2" fill="#d03a4a"/><rect x="4.6" y="108.3" width="3" height="3" fill="#b02a50"/><rect x="22.2" y="98.3" width="2.5" height="2.5" fill="#e86040"/><rect x="17.4" y="91.0" width="2" height="2" fill="#e86040"/><rect x="14.1" y="121.1" width="2" height="2" fill="#8a2050"/><rect x="18.1" y="80.9" width="2.5" height="2.5" fill="#5a1040"/><rect x="23.5" y="97.0" width="2" height="2" fill="#6a1a50"/><rect x="21.7" y="90.4" width="3" height="3" fill="#d03a4a"/><rect x="26.3" y="110.6" width="3" height="3" fill="#b02a50"/><rect x="7.5" y="132.6" width="2.5" height="2.5" fill="#8a2050"/><rect x="7.7" y="120.9" width="2.5" height="2.5" fill="#6a1a50"/><rect x="25.1" y="130.7" width="2" height="2" fill="#d03a4a"/><rect x="14.7" y="126.4" width="3" height="3" fill="#d03a4a"/><rect x="26.4" y="119.5" width="3" height="3" fill="#c84060"/><rect x="10.8" y="113.4" width="1.5" height="1.5" fill="#f08050"/><rect x="1.6" y="83.0" width="2.5" height="2.5" fill="#6a1a50"/><rect x="15.2" y="74.7" width="2" height="2" fill="#e86040"/><rect x="22.8" y="120.7" width="3" height="3" fill="#c84060"/><rect x="26.2" y="133.3" width="1.5" height="1.5" fill="#e86040"/><rect x="16.7" y="122.6" width="2" height="2" fill="#8a2050"/><rect x="21.1" y="95.7" width="3" height="3" fill="#c84060"/><rect x="27.7" y="122.2" width="3" height="3" fill="#d03a4a"/><rect x="7.6" y="136.8" width="2.5" height="2.5" fill="#6a1a50"/><rect x="21.9" y="137.9" width="2.5" height="2.5" fill="#e86040"/><rect x="3.7" y="115.3" width="3" height="3" fill="#5a1040"/><rect x="9.5" y="88.4" width="3" height="3" fill="#6a1a50"/><rect x="13.3" y="127.4" width="2" height="2" fill="#6a1a50"/><rect x="23.9" y="103.4" width="2" height="2" fill="#b02a50"/><rect x="1.7" y="132.9" width="1.5" height="1.5" fill="#8a2050"/><rect x="17.9" y="79.7" width="3" height="3" fill="#c84060"/><rect x="11.6" y="109.9" width="3" height="3" fill="#5a1040"/><rect x="3.4" y="120.8" width="2.5" height="2.5" fill="#b02a50"/><rect x="3.6" y="91.4" width="2.5" height="2.5" fill="#e86040"/><rect x="3.1" y="122.8" width="3" height="3" fill="#6a1a50"/><rect x="11.9" y="84.6" width="2" height="2" fill="#b02a50"/><rect x="13.1" y="84.5" width="2.5" height="2.5" fill="#e86040"/><rect x="14.7" y="109.5" width="2.5" height="2.5" fill="#e86040"/><rect x="2.3" y="79.3" width="3" height="3" fill="#d03a4a"/><rect x="6.3" y="92.4" width="1.5" height="1.5" fill="#6a1a50"/><rect x="17.6" y="85.0" width="1.5" height="1.5" fill="#d03a4a"/><rect x="17.0" y="91.3" width="3" height="3" fill="#c84060"/><rect x="2.5" y="72.6" width="2" height="2" fill="#6a1a50"/><rect x="15.2" y="72.3" width="2.5" height="2.5" fill="#e86040"/><rect x="18.8" y="108.9" width="3" height="3" fill="#6a1a50"/><rect x="24.4" y="92.2" width="2.5" height="2.5" fill="#5a1040"/><rect x="21.2" y="115.1" width="2" height="2" fill="#5a1040"/><rect x="9.6" y="102.0" width="2" height="2" fill="#6a1a50"/><rect x="8.9" y="128.9" width="2" height="2" fill="#8a2050"/><rect x="21.6" y="119.4" width="1.5" height="1.5" fill="#f08050"/><rect x="20.1" y="106.5" width="1.5" height="1.5" fill="#b02a50"/><rect x="18.4" y="118.6" width="2" height="2" fill="#5a1040"/><rect x="2.3" y="88.1" width="1.5" height="1.5" fill="#e86040"/><rect x="8.1" y="79.8" width="2.5" height="2.5" fill="#6a1a50"/><rect x="14.7" y="129.2" width="1.5" height="1.5" fill="#8a2050"/><rect x="4.9" y="97.4" width="2.5" height="2.5" fill="#5a1040"/><rect x="1.7" y="113.1" width="2.5" height="2.5" fill="#b02a50"/><rect x="1.4" y="133.9" width="2.5" height="2.5" fill="#e86040"/><rect x="17.6" y="125.8" width="1.5" height="1.5" fill="#8a2050"/><rect x="7.4" y="109.7" width="3" height="3" fill="#6a1a50"/><rect x="23.5" y="89.0" width="2.5" height="2.5" fill="#5a1040"/><rect x="0.6" y="95.3" width="3" height="3" fill="#d03a4a"/><rect x="19.0" y="82.8" width="3" height="3" fill="#e86040"/><rect x="13.2" y="86.7" width="1.5" height="1.5" fill="#e86040"/><rect x="6.8" y="96.5" width="3" height="3" fill="#f08050"/><rect x="19.3" y="87.4" width="1.5" height="1.5" fill="#6a1a50"/><rect x="2.5" y="139.4" width="2" height="2" fill="#d03a4a"/><rect x="8.0" y="101.0" width="1.5" height="1.5" fill="#c84060"/><rect x="20.1" y="132.8" width="2.5" height="2.5" fill="#6a1a50"/><rect x="5.4" y="72.5" width="3" height="3" fill="#f08050"/><rect x="17.8" y="110.7" width="2" height="2" fill="#b02a50"/><rect x="5.8" y="121.0" width="2.5" height="2.5" fill="#b02a50"/><rect x="7.1" y="111.5" width="2.5" height="2.5" fill="#f08050"/><rect x="12.8" y="83.9" width="1.5" height="1.5" fill="#6a1a50"/><rect x="1.9" y="102.5" width="2.5" height="2.5" fill="#b02a50"/><rect x="7.9" y="121.9" width="1.5" height="1.5" fill="#b02a50"/><rect x="2.9" y="127.5" width="2" height="2" fill="#d03a4a"/><rect x="7.5" y="108.5" width="2.5" height="2.5" fill="#d03a4a"/><rect x="8.5" y="94.2" width="3" height="3" fill="#f08050"/><rect x="24.4" y="126.4" width="3" height="3" fill="#d03a4a"/><rect x="3.5" y="113.7" width="3" height="3" fill="#8a2050"/><rect x="12.7" y="116.5" width="3" height="3" fill="#c84060"/><rect x="6.3" y="73.3" width="1.5" height="1.5" fill="#c84060"/><rect x="23.5" y="109.7" width="2.5" height="2.5" fill="#e86040"/><rect x="11.1" y="107.6" width="2" height="2" fill="#8a2050"/><rect x="0.4" y="104.4" width="2.5" height="2.5" fill="#6a1a50"/><rect x="3.6" y="73.9" width="1.5" height="1.5" fill="#e86040"/><rect x="22.2" y="84.4" width="2.5" height="2.5" fill="#6a1a50"/><rect x="28.4" y="102.0" width="2" height="2" fill="#c84060"/><rect x="0.6" y="126.9" width="2.5" height="2.5" fill="#d03a4a"/><rect x="9.1" y="97.6" width="3" height="3" fill="#e86040"/><rect x="1.2" y="73.4" width="2" height="2" fill="#e86040"/><rect x="14.2" y="94.2" width="2.5" height="2.5" fill="#8a2050"/><rect x="31.6" y="104.5" width="2.5" height="2.5" fill="#6a1a50"/><rect x="19.4" y="132.6" width="3" height="3" fill="#e86040"/><rect x="4.5" y="138.3" width="2.5" height="2.5" fill="#6a1a50"/><rect x="20.1" y="95.9" width="3" height="3" fill="#f08050"/><rect x="3.6" y="95.1" width="3" height="3" fill="#c84060"/><rect x="20.2" y="87.8" width="1.5" height="1.5" fill="#d03a4a"/><rect x="1.9" y="132.8" width="1.5" height="1.5" fill="#b02a50"/><rect x="0.1" y="87.2" width="1.5" height="1.5" fill="#c84060"/><rect x="9.0" y="76.9" width="1.5" height="1.5" fill="#8a2050"/><rect x="10.8" y="137.7" width="1.5" height="1.5" fill="#f08050"/><rect x="13.0" y="74.8" width="2.5" height="2.5" fill="#c84060"/><ellipse cx="52" cy="110.8" rx="17" ry="4.5" fill="#9a6a50" opacity="0.8"/><circle cx="47.7" cy="93.8" r="18.7" fill="#8c1020"/>
<path d="M47.7 93.8 L47.7 75.1 A18.7 18.7 0 0 1 66.4 93.8 Z M47.7 93.8 L47.7 112.5 A18.7 18.7 0 0 1 29 93.8 Z" fill="#3a0a12" opacity="0.85"/>
<text x="26" y="132" font-family="Liberation Sans" font-size="9" fill="#8a6a58" transform="rotate(-8 26 132)">Everything</text>
<path d="M47 72 L53 78 M70 72 L76 66 M72 96 L80 100 M55 100 L51 108" stroke="#fff" stroke-width="4"/>
<path d="M75 90 L120 85" stroke="#60d0a0" stroke-width="2" stroke-dasharray="3 2"/>
<path d="M120 84 L150 80" stroke="#2a4080" stroke-width="4"/>
<circle cx="106" cy="102" r="6" fill="#f6a040" opacity="0.8"/><circle cx="106" cy="102" r="3" fill="#f86030"/>
<circle cx="136" cy="103" r="6" fill="#f6a040" opacity="0.8"/><circle cx="136" cy="103" r="3" fill="#f86030"/>
<circle cx="152" cy="118" r="6" fill="#f6b060" opacity="0.8"/><circle cx="152" cy="118" r="3" fill="#f88040"/>
<circle cx="91" cy="125" r="6" fill="#f6a040" opacity="0.8"/><circle cx="91" cy="125" r="3" fill="#f85030"/>
<circle cx="115" cy="126" r="6" fill="#f6a040" opacity="0.8"/><circle cx="125" cy="131" r="5" fill="#f86030" opacity="0.8"/>
<circle cx="207.5" cy="90" r="17.5" fill="#5b1040" stroke="#e0305a" stroke-width="2.5"/>
<rect x="200" y="85" width="14" height="9" fill="#f09050"/>
<ellipse cx="210" cy="108" rx="20" ry="4.5" fill="#9a7a48" opacity="0.7"/>
<text x="184" y="127" font-family="Liberation Sans" font-size="9" fill="#8a6a58" transform="rotate(-8 184 127)">Screenshake</text>
<path d="M154 86 L162 92 M168 80 L172 88 M178 84 L186 82 M160 102 L168 98" stroke="#8a3050" stroke-width="2"/>
</svg>
<svg class="a" style="left:1032px;top:242px;background:#000" width="247" height="140" viewBox="0 0 247 140"><rect width="247" height="140" fill="#181818"/>
<rect x="0" y="28" width="247" height="82" fill="#4b5339"/>
<rect x="0" y="12.5" width="247" height="1" fill="#4b5339"/>
<rect x="0" y="17" width="247" height="1.2" fill="#4b5339"/>
<rect x="0" y="21.8" width="247" height="3.6" fill="#4b5339"/>
<rect x="0" y="112.3" width="247" height="2.7" fill="#4b5339"/>
<rect x="0" y="118.5" width="247" height="1.5" fill="#4b5339"/>
<rect x="0" y="123.5" width="247" height="1" fill="#4b5339"/>
<text x="8.5" y="13.8" font-family="Liberation Mono" font-weight="700" font-size="9" fill="#e8e4c0" textLength="23" lengthAdjust="spacingAndGlyphs">POW</text>
<rect x="33.7" y="6.4" width="45.5" height="8" fill="#8c9868" stroke="#e8e4c0" stroke-width="1.3"/>
<text x="195" y="13.8" font-family="Liberation Mono" font-weight="700" font-size="9.5" fill="#e8e4c0" textLength="45" lengthAdjust="spacingAndGlyphs">CHANGE</text>
<rect x="25.2" y="48.0" width="11.0" height="10.1" fill="#111"/><rect x="23.8" y="56.9" width="10.5" height="7.2" fill="#111"/><rect x="19.6" y="61.6" width="8.6" height="12.8" fill="#111"/><rect x="27.5" y="57.4" width="20.4" height="18.4" fill="#111"/><rect x="41.6" y="50.4" width="8.6" height="11.9" fill="#111"/><rect x="51.4" y="56.9" width="10.5" height="9.6" fill="#111"/><rect x="46.7" y="64.9" width="12.8" height="5.8" fill="#111"/><rect x="27.1" y="73.7" width="11.0" height="11.9" fill="#111"/><rect x="43.0" y="75.6" width="7.2" height="8.2" fill="#111"/><rect x="26.7" y="49.5" width="8.0" height="7.1" fill="#a8b080"/><rect x="25.3" y="58.4" width="7.5" height="4.2" fill="#e0dcc0"/><rect x="21.1" y="63.1" width="5.6" height="9.8" fill="#e0dcc0"/><rect x="29" y="58.9" width="17.4" height="15.4" fill="#a8b080"/><rect x="43.1" y="51.9" width="5.6" height="8.9" fill="#e8e4c8"/><rect x="52.9" y="58.4" width="7.5" height="6.6" fill="#d8d4b0"/><rect x="48.2" y="66.4" width="9.8" height="2.8" fill="#b8bc90"/><rect x="28.6" y="75.2" width="8.0" height="8.9" fill="#c8c8a0"/><rect x="44.5" y="77.1" width="4.2" height="5.2" fill="#c8c8a0"/><rect x="39" y="63" width="4" height="8" fill="#4b5339"/>
<path d="M70 64 h11 M70 73 h11 M97 64 h12 M97 73 h12 M125 64 h12 M125 73 h12" stroke="#c8c8a0" stroke-width="2.8" stroke-linecap="round"/>
<circle cx="180" cy="68" r="16" fill="#111"/><circle cx="180" cy="68" r="14.3" fill="#9a9f72"/>
<rect x="183" y="64" width="5" height="6" fill="#7e875e"/>
<ellipse cx="144" cy="37.3" rx="8.5" ry="6.5" fill="#111"/><ellipse cx="144" cy="37.3" rx="7" ry="5" fill="#8e9468"/>
<circle cx="138.2" cy="93.7" r="9.5" fill="#111"/><circle cx="138.2" cy="93.7" r="8" fill="#8e9468"/>
<path d="M207 72 L218 70 L226 76 L227 86 L222 94 L210 95 L206 86 Z" fill="#e6e2c0"/>
<path d="M212 78 L220 80 L218 88 L212 86 Z" fill="#4b5339"/>
<circle cx="4" cy="31" r="0.8" fill="#c8c8a0"/><circle cx="80" cy="52" r="0.8" fill="#c8c8a0"/><circle cx="168" cy="38" r="0.8" fill="#c8c8a0"/><circle cx="126" cy="129" r="0.9" fill="#c8c8a0"/><circle cx="33" cy="133" r="0.9" fill="#c8c8a0"/>
</svg>
<svg class="a" style="left:151px;top:478px;background:#000" width="248" height="140" viewBox="0 0 248 140"><defs><linearGradient id="tg1" x1="0" y1="0" x2="0" y2="1"><stop offset="0" stop-color="#3a80d2"/><stop offset="0.35" stop-color="#3e78d0"/><stop offset="0.55" stop-color="#4a66c9"/><stop offset="0.75" stop-color="#5a52c3"/><stop offset="0.9" stop-color="#6a44bf"/><stop offset="1" stop-color="#7040bc"/></linearGradient></defs>
<rect width="248" height="140" fill="url(#tg1)"/>

<path d="M178.6 0 H248 V67.5 Z" fill="#9b11a0"/>
<path d="M213.2 13.3 C212.5 22.5 218.5 28.5 228 28.5 C233.5 28.5 237.5 27 240.8 24.3" fill="none" stroke="#fff" stroke-width="3.3"/>
<path d="M241.6 8.6 H228.5 C222.5 8.6 219.6 12 219.6 15.6 C219.6 19.6 222.6 21.6 228 21.6 H234.3 L235.3 14.9 H227" fill="none" stroke="#fff" stroke-width="3"/>
<rect x="0" y="130" width="248" height="10" fill="#6b4030"/>
<path d="M0 124 L0 121 L3 121 L6 123 L9 123 L12 121 L15 121 L18 123 L21 123 L24 121 L27 121 L30 123 L33 123 L36 121 L39 121 L42 123 L45 123 L48 121 L51 121 L54 123 L57 123 L60 121 L63 121 L66 123 L69 123 L72 121 L75 121 L78 123 L81 123 L84 121 L87 121 L90 123 L93 123 L96 121 L99 121 L102 123 L105 123 L108 121 L111 121 L114 123 L117 123 L120 121 L123 121 L126 123 L129 123 L132 121 L135 121 L138 123 L141 123 L144 121 L147 121 L150 123 L153 123 L156 121 L159 121 L162 123 L165 123 L168 121 L171 121 L174 123 L177 123 L180 121 L183 121 L186 123 L189 123 L192 121 L195 121 L198 123 L201 123 L204 121 L207 121 L210 123 L213 123 L216 121 L219 121 L222 123 L225 123 L228 121 L231 121 L234 123 L237 123 L240 121 L243 121 L246 123 L249 123  L248 131 L0 131 Z" fill="#2fa833"/>
<rect x="0" y="127.5" width="248" height="3" fill="#1a7a2a"/>
<circle cx="2" cy="134" r="2" fill="#a0603a"/><circle cx="8" cy="136" r="2" fill="#a0603a"/><circle cx="14" cy="138" r="2" fill="#a0603a"/><circle cx="20" cy="135" r="2" fill="#a0603a"/><circle cx="26" cy="137" r="2" fill="#a0603a"/><circle cx="32" cy="134" r="2" fill="#a0603a"/><circle cx="38" cy="136" r="2" fill="#a0603a"/><circle cx="44" cy="138" r="2" fill="#a0603a"/><circle cx="50" cy="135" r="2" fill="#a0603a"/><circle cx="56" cy="137" r="2" fill="#a0603a"/><circle cx="62" cy="134" r="2" fill="#a0603a"/><circle cx="68" cy="136" r="2" fill="#a0603a"/><circle cx="74" cy="138" r="2" fill="#a0603a"/><circle cx="80" cy="135" r="2" fill="#a0603a"/><circle cx="86" cy="137" r="2" fill="#a0603a"/><circle cx="92" cy="134" r="2" fill="#a0603a"/><circle cx="98" cy="136" r="2" fill="#a0603a"/><circle cx="104" cy="138" r="2" fill="#a0603a"/><circle cx="110" cy="135" r="2" fill="#a0603a"/><circle cx="116" cy="137" r="2" fill="#a0603a"/><circle cx="122" cy="134" r="2" fill="#a0603a"/><circle cx="128" cy="136" r="2" fill="#a0603a"/><circle cx="134" cy="138" r="2" fill="#a0603a"/><circle cx="140" cy="135" r="2" fill="#a0603a"/><circle cx="146" cy="137" r="2" fill="#a0603a"/><circle cx="152" cy="134" r="2" fill="#a0603a"/><circle cx="158" cy="136" r="2" fill="#a0603a"/><circle cx="164" cy="138" r="2" fill="#a0603a"/><circle cx="170" cy="135" r="2" fill="#a0603a"/><circle cx="176" cy="137" r="2" fill="#a0603a"/><circle cx="182" cy="134" r="2" fill="#a0603a"/><circle cx="188" cy="136" r="2" fill="#a0603a"/><circle cx="194" cy="138" r="2" fill="#a0603a"/><circle cx="200" cy="135" r="2" fill="#a0603a"/><circle cx="206" cy="137" r="2" fill="#a0603a"/><circle cx="212" cy="134" r="2" fill="#a0603a"/><circle cx="218" cy="136" r="2" fill="#a0603a"/><circle cx="224" cy="138" r="2" fill="#a0603a"/><circle cx="230" cy="135" r="2" fill="#a0603a"/><circle cx="236" cy="137" r="2" fill="#a0603a"/><circle cx="242" cy="134" r="2" fill="#a0603a"/><circle cx="248" cy="136" r="2" fill="#a0603a"/><rect x="125.4" y="83.8" width="63.6" height="37" fill="#333"/>
<rect x="125.4" y="83.8" width="63.6" height="5" fill="#4a58a8"/>
<rect x="129" y="91" width="5" height="4" fill="#a012a0"/>
<rect x="139" y="92" width="14" height="1.2" fill="#aaa"/>
<rect x="147" y="97.5" width="20" height="1" fill="#bbb"/>
<rect x="132.3" y="45" width="50.7" height="39" fill="#dcdcdc" stroke="#999" stroke-width="0.6"/>
<rect x="145" y="57" width="26" height="15.6" fill="none" stroke="#b0b0b0" stroke-width="0.6"/>
<path d="M151 61 h5 v1 h4 v-1 h5 v6 l-7 5.5 l-7 -5.5 Z" fill="#a412a4"/>
<rect x="132.3" y="80" width="9" height="4" fill="#555"/>
<path d="M168.4 40 L191 36.5 L193.3 54 L170.6 57.2 Z" fill="#111"/>
<text x="173" y="53" font-family="Liberation Sans" font-weight="700" font-size="13" fill="#f03890" transform="rotate(-8 173 53)">Hi</text>

<rect x="0" y="6.6" width="51" height="20.3" fill="#9b11a0"/>
<rect x="0" y="26.9" width="105" height="40" fill="#000"/>
<text x="4.2" y="23.5" font-family="Liberation Sans" font-weight="700" font-size="19" fill="#fff" textLength="41.5" lengthAdjust="spacingAndGlyphs">Intro</text>
<text x="3.0" y="56.5" font-family="Liberation Sans" font-weight="700" font-size="32" fill="#fff" transform="translate(3.0 0) scale(0.927 1) translate(-3.0 0)">Layout</text>
</svg>
<svg class="a" style="left:412px;top:478px;background:#000" width="248" height="140" viewBox="0 0 248 140"><defs><linearGradient id="tg2" x1="0" y1="0" x2="0" y2="1"><stop offset="0" stop-color="#3a80d2"/><stop offset="0.35" stop-color="#3e78d0"/><stop offset="0.55" stop-color="#4a66c9"/><stop offset="0.75" stop-color="#5a52c3"/><stop offset="0.9" stop-color="#6a44bf"/><stop offset="1" stop-color="#7040bc"/></linearGradient></defs>
<rect width="248" height="140" fill="url(#tg2)"/>

<path d="M178.6 0 H248 V67.5 Z" fill="#9b11a0"/>
<path d="M213.2 13.3 C212.5 22.5 218.5 28.5 228 28.5 C233.5 28.5 237.5 27 240.8 24.3" fill="none" stroke="#fff" stroke-width="3.3"/>
<path d="M241.6 8.6 H228.5 C222.5 8.6 219.6 12 219.6 15.6 C219.6 19.6 222.6 21.6 228 21.6 H234.3 L235.3 14.9 H227" fill="none" stroke="#fff" stroke-width="3"/>
<rect x="0" y="117.6" width="248" height="22.4" fill="#7c7a8c"/><rect x="1" y="118.5" width="17" height="3.8" fill="#c8c8d4"/><rect x="21" y="118.5" width="17" height="3.8" fill="#c8c8d4"/><rect x="41" y="118.5" width="17" height="3.8" fill="#c8c8d4"/><rect x="61" y="118.5" width="17" height="3.8" fill="#c8c8d4"/><rect x="81" y="118.5" width="17" height="3.8" fill="#c8c8d4"/><rect x="101" y="118.5" width="17" height="3.8" fill="#c8c8d4"/><rect x="121" y="118.5" width="17" height="3.8" fill="#c8c8d4"/><rect x="141" y="118.5" width="17" height="3.8" fill="#c8c8d4"/><rect x="161" y="118.5" width="17" height="3.8" fill="#c8c8d4"/><rect x="181" y="118.5" width="17" height="3.8" fill="#c8c8d4"/><rect x="201" y="118.5" width="17" height="3.8" fill="#c8c8d4"/><rect x="221" y="118.5" width="17" height="3.8" fill="#c8c8d4"/><rect x="241" y="118.5" width="17" height="3.8" fill="#c8c8d4"/><rect x="-8" y="123.5" width="17" height="3.6" fill="#a4a2b2"/><rect x="12" y="123.5" width="17" height="3.6" fill="#a4a2b2"/><rect x="32" y="123.5" width="17" height="3.6" fill="#a4a2b2"/><rect x="52" y="123.5" width="17" height="3.6" fill="#a4a2b2"/><rect x="72" y="123.5" width="17" height="3.6" fill="#a4a2b2"/><rect x="92" y="123.5" width="17" height="3.6" fill="#a4a2b2"/><rect x="112" y="123.5" width="17" height="3.6" fill="#a4a2b2"/><rect x="132" y="123.5" width="17" height="3.6" fill="#a4a2b2"/><rect x="152" y="123.5" width="17" height="3.6" fill="#a4a2b2"/><rect x="172" y="123.5" width="17" height="3.6" fill="#a4a2b2"/><rect x="192" y="123.5" width="17" height="3.6" fill="#a4a2b2"/><rect x="212" y="123.5" width="17" height="3.6" fill="#a4a2b2"/><rect x="232" y="123.5" width="17" height="3.6" fill="#a4a2b2"/><rect x="1" y="128.3" width="17" height="3.6" fill="#9492a4"/><rect x="21" y="128.3" width="17" height="3.6" fill="#9492a4"/><rect x="41" y="128.3" width="17" height="3.6" fill="#9492a4"/><rect x="61" y="128.3" width="17" height="3.6" fill="#9492a4"/><rect x="81" y="128.3" width="17" height="3.6" fill="#9492a4"/><rect x="101" y="128.3" width="17" height="3.6" fill="#9492a4"/><rect x="121" y="128.3" width="17" height="3.6" fill="#9492a4"/><rect x="141" y="128.3" width="17" height="3.6" fill="#9492a4"/><rect x="161" y="128.3" width="17" height="3.6" fill="#9492a4"/><rect x="181" y="128.3" width="17" height="3.6" fill="#9492a4"/><rect x="201" y="128.3" width="17" height="3.6" fill="#9492a4"/><rect x="221" y="128.3" width="17" height="3.6" fill="#9492a4"/><rect x="241" y="128.3" width="17" height="3.6" fill="#9492a4"/><rect x="-8" y="133.2" width="17" height="3.6" fill="#6c6a80"/><rect x="12" y="133.2" width="17" height="3.6" fill="#6c6a80"/><rect x="32" y="133.2" width="17" height="3.6" fill="#6c6a80"/><rect x="52" y="133.2" width="17" height="3.6" fill="#6c6a80"/><rect x="72" y="133.2" width="17" height="3.6" fill="#6c6a80"/><rect x="92" y="133.2" width="17" height="3.6" fill="#6c6a80"/><rect x="112" y="133.2" width="17" height="3.6" fill="#6c6a80"/><rect x="132" y="133.2" width="17" height="3.6" fill="#6c6a80"/><rect x="152" y="133.2" width="17" height="3.6" fill="#6c6a80"/><rect x="172" y="133.2" width="17" height="3.6" fill="#6c6a80"/><rect x="192" y="133.2" width="17" height="3.6" fill="#6c6a80"/><rect x="212" y="133.2" width="17" height="3.6" fill="#6c6a80"/><rect x="232" y="133.2" width="17" height="3.6" fill="#6c6a80"/><path d="M141 117.6 L141 112 L145 108 L150 107 L185 107 L191 108 L196.5 113 L196.5 117.6 Z" fill="#cfd0e0"/>
<path d="M141 113 h55" stroke="#a8a8c0" stroke-width="0.8"/>
<path d="M148 104 L160 100 L176 100 L189 104 L186 110 L150 110 Z" fill="#7a5040"/>
<path d="M159.2 85 L181 101.9 L180.3 105.6 L151.7 105.6 L153.5 98.1 L156.7 91.3 Z" fill="#e62020"/>
<path d="M158 92 L166 98 L162 103 L155 102 Z" fill="#ff5030" opacity="0.7"/>
<ellipse cx="162.3" cy="75" rx="3.8" ry="5.5" fill="#e62020"/><ellipse cx="170.4" cy="82.5" rx="3.8" ry="6" fill="#e62020"/>
<rect x="169.5" y="80" width="2" height="4" fill="#ffb080"/>
<ellipse cx="182.7" cy="27.8" rx="3.8" ry="4" fill="#e8a050"/><path d="M176 22 L181 25 M189 22 L184 25" stroke="#fff" stroke-width="2.2"/>
<ellipse cx="134.3" cy="49.8" rx="3.8" ry="4" fill="#e8a050"/><path d="M128 45 L133 47 M141 45 L136 47" stroke="#fff" stroke-width="2.2"/>
<ellipse cx="218.8" cy="81" rx="4" ry="4.5" fill="#40b8f0"/><path d="M214 74 L217 77 M223 74 L220 77" stroke="#fff" stroke-width="2"/>

<rect x="0" y="6.6" width="51" height="20.3" fill="#9b11a0"/>
<rect x="0" y="26.9" width="114" height="40" fill="#000"/>
<text x="4.2" y="23.5" font-family="Liberation Sans" font-weight="700" font-size="19" fill="#fff" textLength="41.5" lengthAdjust="spacingAndGlyphs">Intro</text>
<text x="4.0" y="56.5" font-family="Liberation Sans" font-weight="700" font-size="32" fill="#fff" transform="translate(4.0 0) scale(0.905 1) translate(-4.0 0)">Objects</text>
</svg>
<svg class="a" style="left:673px;top:478px;background:#000" width="248" height="140" viewBox="0 0 248 140"><defs><linearGradient id="tg3" x1="0" y1="0" x2="0" y2="1"><stop offset="0" stop-color="#3a80d2"/><stop offset="0.35" stop-color="#3e78d0"/><stop offset="0.55" stop-color="#4a66c9"/><stop offset="0.75" stop-color="#5a52c3"/><stop offset="0.9" stop-color="#6a44bf"/><stop offset="1" stop-color="#7040bc"/></linearGradient></defs>
<rect width="248" height="140" fill="url(#tg3)"/>

<path d="M178.6 0 H248 V67.5 Z" fill="#9b11a0"/>
<path d="M213.2 13.3 C212.5 22.5 218.5 28.5 228 28.5 C233.5 28.5 237.5 27 240.8 24.3" fill="none" stroke="#fff" stroke-width="3.3"/>
<path d="M241.6 8.6 H228.5 C222.5 8.6 219.6 12 219.6 15.6 C219.6 19.6 222.6 21.6 228 21.6 H234.3 L235.3 14.9 H227" fill="none" stroke="#fff" stroke-width="3"/>
<rect x="0" y="114.7" width="248" height="25.3" fill="#fde0cc"/><path d="M0 114.7 L0.0 125.3 L6.0 125.3 L6.0 128.4 L10.0 128.4 L10.0 125.3 L18.3 125.3 L18.3 129.7 L30.6 129.7 L30.6 125.3 L41.0 125.3 L41.0 128.4 L50.0 128.4 L50.0 133.2 L67.3 133.2 L67.3 125.3 L86.0 125.3 L86.0 128.4 L93.0 128.4 L93.0 125.3 L101.0 125.3 L101.0 129.7 L112.0 129.7 L112.0 125.3 L127.0 125.3 L127.0 125.3 L133.0 125.3 L133.0 128.4 L137.0 128.4 L137.0 125.3 L145.3 125.3 L145.3 129.7 L157.6 129.7 L157.6 125.3 L168.0 125.3 L168.0 128.4 L177.0 128.4 L177.0 133.2 L194.3 133.2 L194.3 125.3 L213.0 125.3 L213.0 128.4 L220.0 128.4 L220.0 125.3 L228.0 125.3 L228.0 129.7 L239.0 129.7 L239.0 125.3 L253.0 125.3 L248 114.7 Z" fill="#d9a27c"/><path d="M0 114.7 L0.0 120.1 L6.0 120.1 L6.0 123.2 L10.0 123.2 L10.0 120.1 L18.3 120.1 L18.3 124.5 L30.6 124.5 L30.6 120.1 L41.0 120.1 L41.0 123.2 L50.0 123.2 L50.0 128.0 L67.3 128.0 L67.3 120.1 L86.0 120.1 L86.0 123.2 L93.0 123.2 L93.0 120.1 L101.0 120.1 L101.0 124.5 L112.0 124.5 L112.0 120.1 L127.0 120.1 L127.0 120.1 L133.0 120.1 L133.0 123.2 L137.0 123.2 L137.0 120.1 L145.3 120.1 L145.3 124.5 L157.6 124.5 L157.6 120.1 L168.0 120.1 L168.0 123.2 L177.0 123.2 L177.0 128.0 L194.3 128.0 L194.3 120.1 L213.0 120.1 L213.0 123.2 L220.0 123.2 L220.0 120.1 L228.0 120.1 L228.0 124.5 L239.0 124.5 L239.0 120.1 L253.0 120.1 L248 114.7 Z" fill="#b6d83a"/>
<g transform="translate(22 92) rotate(20)" fill="#3a90dc" opacity="0.55"><rect x="-12.0" y="-12.0" width="24" height="20.4"/><rect x="-15.0" y="1.2000000000000002" width="5" height="7.199999999999999"/><rect x="10.0" y="1.2000000000000002" width="5" height="7.199999999999999"/><rect x="-10.0" y="10.2" width="6" height="5"/><rect x="4.0" y="10.2" width="6" height="5"/><rect x="-9.0" y="-16.0" width="6" height="5"/><rect x="3.0" y="-16.0" width="6" height="5"/><rect x="-6" y="-3" width="3" height="2" fill="#2a3a70"/><rect x="4" y="-3" width="3" height="2" fill="#2a3a70"/></g><g transform="translate(68 85) rotate(-25)" fill="#38a0e4" opacity="0.7"><rect x="-12.5" y="-12.5" width="25" height="21.25"/><rect x="-15.5" y="1.25" width="5" height="7.5"/><rect x="10.5" y="1.25" width="5" height="7.5"/><rect x="-10.5" y="10.625" width="6" height="5"/><rect x="4.5" y="10.625" width="6" height="5"/><rect x="-9.5" y="-16.5" width="6" height="5"/><rect x="3.5" y="-16.5" width="6" height="5"/><rect x="-6" y="-3" width="3" height="2" fill="#2a3a70"/><rect x="4" y="-3" width="3" height="2" fill="#2a3a70"/></g><g transform="translate(112 96) rotate(12)" fill="#36b0ec" opacity="1"><rect x="-12.5" y="-12.5" width="25" height="21.25"/><rect x="-15.5" y="1.25" width="5" height="7.5"/><rect x="10.5" y="1.25" width="5" height="7.5"/><rect x="-10.5" y="10.625" width="6" height="5"/><rect x="4.5" y="10.625" width="6" height="5"/><rect x="-9.5" y="-16.5" width="6" height="5"/><rect x="3.5" y="-16.5" width="6" height="5"/><rect x="-6" y="-3" width="3" height="2" fill="#2a3a70"/><rect x="4" y="-3" width="3" height="2" fill="#2a3a70"/></g><g transform="translate(161 80) rotate(32)" fill="#33b6ee" opacity="1"><rect x="-13.0" y="-13.0" width="26" height="22.099999999999998"/><rect x="-16.0" y="1.3" width="5" height="7.8"/><rect x="11.0" y="1.3" width="5" height="7.8"/><rect x="-11.0" y="11.049999999999999" width="6" height="5"/><rect x="5.0" y="11.049999999999999" width="6" height="5"/><rect x="-10.0" y="-17.0" width="6" height="5"/><rect x="4.0" y="-17.0" width="6" height="5"/><rect x="-6" y="-3" width="3" height="2" fill="#2a3a70"/><rect x="4" y="-3" width="3" height="2" fill="#2a3a70"/></g><g transform="translate(208 93) rotate(35)" fill="#30bcf2" opacity="1"><rect x="-13.5" y="-13.5" width="27" height="22.95"/><rect x="-16.5" y="1.35" width="5" height="8.1"/><rect x="11.5" y="1.35" width="5" height="8.1"/><rect x="-11.5" y="11.475" width="6" height="5"/><rect x="5.5" y="11.475" width="6" height="5"/><rect x="-10.5" y="-17.5" width="6" height="5"/><rect x="4.5" y="-17.5" width="6" height="5"/><rect x="-6" y="-3" width="3" height="2" fill="#2a3a70"/><rect x="4" y="-3" width="3" height="2" fill="#2a3a70"/></g>
<ellipse cx="115" cy="21" rx="4" ry="5" fill="#30b8f0"/><path d="M110 14 L113 18 M120 14 L117 18" stroke="#fff" stroke-width="2"/>
<ellipse cx="190.7" cy="34" rx="4" ry="5" fill="#30b8f0"/><path d="M186 27 L189 31 M196 27 L193 31" stroke="#fff" stroke-width="2"/>

<rect x="0" y="6.6" width="51" height="20.3" fill="#9b11a0"/>
<rect x="0" y="26.9" width="101.5" height="40" fill="#000"/>
<text x="4.2" y="23.5" font-family="Liberation Sans" font-weight="700" font-size="19" fill="#fff" textLength="41.5" lengthAdjust="spacingAndGlyphs">Intro</text>
<text x="3.6" y="56.5" font-family="Liberation Sans" font-weight="700" font-size="32" fill="#fff" transform="translate(3.6 0) scale(0.895 1) translate(-3.6 0)">Events</text>
</svg>
<svg class="a" style="left:934px;top:478px;background:#000" width="248" height="140" viewBox="0 0 248 140"><defs><linearGradient id="tg4" x1="0" y1="0" x2="0" y2="1"><stop offset="0" stop-color="#3a80d2"/><stop offset="0.35" stop-color="#3e78d0"/><stop offset="0.55" stop-color="#4a66c9"/><stop offset="0.75" stop-color="#5a52c3"/><stop offset="0.9" stop-color="#6a44bf"/><stop offset="1" stop-color="#7040bc"/></linearGradient></defs>
<rect width="248" height="140" fill="url(#tg4)"/>

<path d="M178.6 0 H248 V67.5 Z" fill="#9b11a0"/>
<path d="M213.2 13.3 C212.5 22.5 218.5 28.5 228 28.5 C233.5 28.5 237.5 27 240.8 24.3" fill="none" stroke="#fff" stroke-width="3.3"/>
<path d="M241.6 8.6 H228.5 C222.5 8.6 219.6 12 219.6 15.6 C219.6 19.6 222.6 21.6 228 21.6 H234.3 L235.3 14.9 H227" fill="none" stroke="#fff" stroke-width="3"/>
<path d="M0 82 C15 76 30 76 45 82 C60 88 75 88 90 82 C105 76 120 76 135 82 C150 88 165 88 180 82 C195 76 210 76 225 82 C235 86 242 86 248 84 V140 H0 Z" fill="#6b93d6"/>
<path d="M0 79 C15 73 30 73 45 79 C60 85 75 85 90 79 C105 73 120 73 135 79 C150 85 165 85 180 79 C195 73 210 73 225 79 C235 83 242 83 248 81 V84 C242 86 235 86 225 82 C210 76 195 76 180 82 C165 88 150 88 135 82 C120 76 105 76 90 82 C75 88 60 88 45 82 C30 76 15 76 0 82 Z" fill="#4e66c4"/>
<path d="M49 126 L55 106 L68 102 L79 112 L80 126 Z" fill="#9dbcd8"/>
<path d="M238 122 L240 102 L248 98 V122 Z" fill="#9dbcd8"/>
<path d="M8 124 C6 114 10 108 12 104 M22 124 C20 110 24 102 26 98 M30 122 C32 114 30 110 34 106 M138 122 C136 108 142 98 144 92 M146 122 C148 110 144 104 150 96 M158 122 C156 110 162 104 160 96 M192 122 C190 108 196 98 194 90 M204 122 C206 104 200 96 208 84 M216 122 C214 110 220 102 218 96" stroke="#4cb59a" stroke-width="5" fill="none" stroke-linecap="round"/>
<circle cx="209" cy="83" r="3" fill="#2a8a3a"/>
<path d="M0 122 C30 116 60 118 90 124 C130 120 170 116 210 120 C230 122 240 120 248 118 V140 H0 Z" fill="#94a2a6"/>
<circle cx="97.3" cy="90.3" r="5.5" fill="none" stroke="#d8ecf8" stroke-width="1.5"/>
<circle cx="94" cy="109" r="3" fill="#d8ecf8"/>
<path d="M99 112 L112 106 L120 112 L118 126 L106 130 L100 122 Z" fill="#58aee8"/>
<path d="M114 100 L118 106 M122 114 L128 112" stroke="#e8e0d8" stroke-width="3"/>

<rect x="0" y="6.6" width="51" height="20.3" fill="#9b11a0"/>
<rect x="0" y="26.9" width="150" height="40" fill="#000"/>
<text x="4.2" y="23.5" font-family="Liberation Sans" font-weight="700" font-size="19" fill="#fff" textLength="41.5" lengthAdjust="spacingAndGlyphs">Intro</text>
<text x="4.3" y="56.5" font-family="Liberation Sans" font-weight="700" font-size="32" fill="#fff" transform="translate(4.3 0) scale(0.915 1) translate(-4.3 0)">Jumpstart</text>
</svg>
<svg class="a" style="left:1195px;top:478px;background:#000" width="84" height="140" viewBox="0 0 84 140"><defs><linearGradient id="tg5" x1="0" y1="0" x2="0" y2="1"><stop offset="0" stop-color="#3a80d2"/><stop offset="0.35" stop-color="#3e78d0"/><stop offset="0.55" stop-color="#4a66c9"/><stop offset="0.75" stop-color="#5a52c3"/><stop offset="0.9" stop-color="#6a44bf"/><stop offset="1" stop-color="#7040bc"/></linearGradient></defs>
<rect width="84" height="140" fill="url(#tg5)"/>

<path d="M178.6 0 H248 V67.5 Z" fill="#9b11a0"/>
<path d="M213.2 13.3 C212.5 22.5 218.5 28.5 228 28.5 C233.5 28.5 237.5 27 240.8 24.3" fill="none" stroke="#fff" stroke-width="3.3"/>
<path d="M241.6 8.6 H228.5 C222.5 8.6 219.6 12 219.6 15.6 C219.6 19.6 222.6 21.6 228 21.6 H234.3 L235.3 14.9 H227" fill="none" stroke="#fff" stroke-width="3"/>
<rect x="0" y="123" width="84" height="17" fill="#7ec02c"/>
<path d="M0 140 L0 140 L8 132 L16 140 L16 140 L24 132 L32 140 L32 140 L40 132 L48 140 L48 140 L56 132 L64 140 L64 140 L72 132 L80 140 L80 140 L88 132 L96 140  L84 140 Z" fill="#c08a5a"/>
<circle cx="36" cy="98" r="13" fill="#8a90d8" opacity="0.35"/><circle cx="40" cy="96" r="13" fill="none" stroke="#9ab0d8" stroke-width="1.2" opacity="0.5"/><ellipse cx="40" cy="113" rx="8" ry="9" fill="#8ab0d0" opacity="0.35"/>
<circle cx="48" cy="96" r="13" fill="none" stroke="#b0c8e8" stroke-width="1.2" opacity="0.6"/>
<ellipse cx="58.5" cy="112" rx="9" ry="10" fill="#5ec0b0"/>
<circle cx="58.4" cy="96.8" r="12.5" fill="#5ec0b0"/>
<circle cx="58.4" cy="96.8" r="13.5" fill="none" stroke="#f0f0f0" stroke-width="1.6"/>
<circle cx="53" cy="100" r="1.8" fill="#2a6a5a"/><circle cx="64" cy="100" r="1.8" fill="#2a6a5a"/>
<text x="45" y="79.5" font-family="Liberation Sans" font-weight="700" font-style="italic" font-size="18" fill="#fff" stroke="#444" stroke-width="0.8" textLength="20" lengthAdjust="spacingAndGlyphs">+1</text>

<rect x="0" y="6.6" width="51" height="20.3" fill="#9b11a0"/>
<rect x="0" y="26.9" width="100" height="40" fill="#000"/>
<text x="4.2" y="23.5" font-family="Liberation Sans" font-weight="700" font-size="19" fill="#fff" textLength="41.5" lengthAdjust="spacingAndGlyphs">Intro</text>
<text x="4.9" y="56.5" font-family="Liberation Sans" font-weight="700" font-size="32" fill="#fff" transform="translate(4.9 0) scale(0.915 1) translate(-4.9 0)">Variab</text>
</svg>
<svg class="a" style="left:151px;top:690px;background:#000" width="248" height="140" viewBox="0 0 248 140"><defs><radialGradient id="neb" cx="0.42" cy="0.3" r="0.65"><stop offset="0" stop-color="#16377e"/><stop offset="0.5" stop-color="#0b2258"/><stop offset="1" stop-color="#040a1c"/></radialGradient>
<filter id="blur1" filterUnits="userSpaceOnUse" x="-20" y="-20" width="290" height="180"><feGaussianBlur stdDeviation="3"/></filter><filter id="blur2" filterUnits="userSpaceOnUse" x="-20" y="-20" width="290" height="180"><feGaussianBlur stdDeviation="2"/></filter><filter id="blur3"><feGaussianBlur stdDeviation="1.5"/></filter></defs>
<rect width="248" height="140" fill="url(#neb)"/>
<g fill="none" stroke="#3a70e0" stroke-width="2.2" opacity="0.6" filter="url(#blur3)">
<path d="M80 40 C90 20 110 15 120 25 C130 35 118 50 108 45"/>
<path d="M100 10 C120 30 130 5 150 20 C165 30 160 45 175 40"/>
<path d="M60 55 C75 45 95 55 105 48 M140 30 C150 45 170 35 180 50"/>
<path d="M95 70 C110 80 130 60 150 75 C160 85 175 70 190 80"/>
<path d="M30 20 C45 35 60 20 70 30 M170 90 C180 100 200 90 210 110"/>
<path d="M120 95 C140 110 160 95 170 120"/>
</g>
<g fill="#6aa0ff" opacity="0.45" filter="url(#blur1)"><ellipse cx="115" cy="20" rx="10" ry="6"/><ellipse cx="155" cy="30" rx="9" ry="5"/><ellipse cx="80" cy="50" rx="8" ry="5"/></g>
<rect x="0" y="0" width="45.4" height="140" fill="#27221f"/>
<path d="M6 0 V140 M14 0 V50 M38 95 V140" stroke="#3a2a24" stroke-width="2"/>
<rect x="4" y="118" width="22" height="22" fill="#4a2218" opacity="0.7"/>
<circle cx="22.5" cy="73.6" r="21" fill="#35302c" stroke="#5a5450" stroke-width="2.5"/>
<circle cx="22.5" cy="73.6" r="14" fill="#15213a" stroke="#6a90d0" stroke-width="1.5"/>
<path d="M12 58 h6 M28 58 h6 M12 89 h6 M28 89 h6" stroke="#dde8ff" stroke-width="1.6"/>
<circle cx="31.3" cy="16.3" r="9.5" fill="#5e5a55" stroke="#2a2a2a" stroke-width="1.5"/><path d="M25 13 L36 19 M24 17 L34 23" stroke="#2a2a2a" stroke-width="1.5"/>
<circle cx="33" cy="122" r="9.5" fill="#5e5a55" stroke="#2a2a2a" stroke-width="1.5"/><path d="M27 119 L38 125 M26 123 L36 129" stroke="#2a2a2a" stroke-width="1.5"/>
<path d="M40 20 L52 26 M40 116 L52 110" stroke="#c8b030" stroke-width="3"/>
<g filter="url(#blur1)">
<path d="M24 73.5 L168 64" stroke="#8cc0ff" stroke-width="16" stroke-linecap="round" opacity="0.8"/></g>
<g filter="url(#blur2)" fill="#fff">
<ellipse cx="33" cy="73" rx="13" ry="6"/><ellipse cx="69" cy="71" rx="20" ry="6.5"/><ellipse cx="110" cy="68" rx="16" ry="5.5"/><ellipse cx="150" cy="65" rx="20" ry="6.5"/>
</g>
<g stroke="#e0c040" stroke-width="1.2">
<path d="M60 24 L66 26 M60 27 L66 29 M80 34 L87 37 M80 37 L87 40 M103 43 L110 46 M103 46 L110 49 M131 56 L138 59 M131 59 L138 62 M133 73 L140 70 M133 76 L140 73 M176 74 L183 77 M176 77 L183 80 M198 84 L205 87 M198 87 L205 90 M219 92 L226 95 M219 95 L226 98 M104 90 L111 87 M104 93 L111 90 M83 98 L90 95 M83 101 L90 98 M63 107 L70 104 M63 110 L70 107"/></g>
<g fill="#40c020" opacity="0.9"><ellipse cx="206" cy="29.5" rx="8" ry="4.5"/><ellipse cx="220" cy="37" rx="8" ry="4.5"/><ellipse cx="185" cy="60.5" rx="8" ry="4.5"/><ellipse cx="205" cy="60.5" rx="8" ry="4.5"/></g>
<path d="M214 29 L228 30 M228 37 L240 38 M193 60 L200 61 M213 60 L226 61" stroke="#40a020" stroke-width="2"/>
<path d="M166 20 C175 15 185 25 195 18 C205 12 212 22 222 18 M200 60 C210 55 220 65 240 55 M45 136 C55 130 65 140 80 132" stroke="#a03030" stroke-width="0.8" fill="none"/>
<ellipse cx="75" cy="9.5" rx="8" ry="5" fill="#2a4a70" opacity="0.7"/><ellipse cx="192" cy="7" rx="8" ry="6" fill="#2a4a70" opacity="0.7"/><ellipse cx="207" cy="110" rx="8" ry="5" fill="#2a4a70" opacity="0.7"/><ellipse cx="180" cy="55" rx="12" ry="6" fill="#2a4a70" opacity="0.5"/>
<text x="205" y="5" font-family="Liberation Sans" font-weight="700" font-size="5" fill="#fff">Score: 10K</text>
</svg>
<svg class="a" style="left:412px;top:690px;background:#000" width="248" height="140" viewBox="0 0 248 140"><rect width="248" height="140" fill="#221512"/>
<rect width="248" height="75.3" fill="#03061e"/>
<path d="M0 94.7 L10 94 L10 98 L35 98 L35 102 L60 102 L60 108 L90 108 L90 103.5 L190 103.5 L190 94 L248 94 L248 118 L210 118 L210 125 L180 125 L180 131 L110 131 L110 124 L55 124 L55 120 L30 120 L30 118 L0 118 Z" fill="#44271f"/>
<path d="M8 16 L16 9 L26 9 L26 6 L40 6 L40 9 L52 12 L60 20 L64 30 L68 40 L66 56 L60 64 L50 70 L36 74 L20 72 L8 66 L4 56 L3 40 L4 28 Z" fill="#052511"/>
<rect x="26.9" y="75" width="8" height="19.7" fill="#150d0a"/>
<path d="M196 20 L206 12 L214 8 L226 8 L236 12 L243 20 L246 30 L246 58 L240 70 L226 75 L210 74 L196 66 L188 56 L186 40 L188 30 Z" fill="#052511"/>
<rect x="219.7" y="75" width="8" height="19.7" fill="#150d0a"/>
<path d="M66.5 103.5 V67.4 L69 62 L72 54 L76 48 L81 42 L87 36 L95 33 L105 30.4 H150 L158 32 L166 36 L172 42 L178 48 L183 56 L186.5 62 L188.9 67.4 V103.5 Z" fill="#285a1e"/>
<path d="M119.3 84 L122 81.5 H136 L138.7 84 V103.5 H119.3 Z" fill="#9a9a9a"/>
<rect x="133" y="92" width="2.5" height="2.5" fill="#e02020"/>
<rect x="4" y="18.1" width="5.3" height="45" fill="#22c03e"/>
<rect x="11.1" y="18.1" width="4.4" height="45" fill="#d0902e"/>
<rect x="107" y="95.6" width="10.6" height="5" fill="#c02020"/>
<rect x="108" y="100.6" width="9" height="6" fill="#e8d8b0"/>
<rect x="109" y="106.6" width="7" height="7" fill="#1a3060"/>
<rect x="109" y="113.6" width="7" height="5" fill="#111"/>
<rect x="211" y="95" width="10" height="5" fill="#3a3a30"/><rect x="212" y="100" width="8" height="5" fill="#e8d8b0"/><rect x="212" y="105" width="8" height="7" fill="#1a3020"/>
<rect x="240" y="8" width="8" height="122" fill="#202028"/>
<rect x="7" y="8" width="2" height="2" fill="#bbb"/><rect x="96" y="17" width="2" height="2" fill="#bbb"/><rect x="183" y="12" width="2" height="2" fill="#bbb"/>
</svg>
<svg class="a" style="left:673px;top:690px;background:#000" width="248" height="140" viewBox="0 0 248 140"><defs><linearGradient id="pink" x1="0" y1="0" x2="0.6" y2="1"><stop offset="0" stop-color="#f6c0ea"/><stop offset="0.5" stop-color="#fbeef2"/><stop offset="1" stop-color="#e4e8f4"/></linearGradient>
<radialGradient id="pk2" cx="0" cy="1" r="0.5"><stop offset="0" stop-color="#e9a0e8"/><stop offset="1" stop-color="#e9a0e8" stop-opacity="0"/></radialGradient>
<radialGradient id="bl2" cx="1" cy="1" r="0.55"><stop offset="0" stop-color="#b8d8f4"/><stop offset="1" stop-color="#b8d8f4" stop-opacity="0"/></radialGradient></defs>
<rect width="248" height="140" fill="url(#pink)"/>
<rect width="248" height="140" fill="url(#pk2)"/>
<rect width="248" height="140" fill="url(#bl2)"/>
<!-- girl1 -->
<path d="M0 24 C8 14 22 10 36 11 C52 12 66 22 68 36 C70 50 64 60 66 72 C68 86 62 96 66 104 L40 96 L14 112 C8 112 2 104 0 96 Z" fill="#2a2222"/>
<path d="M1 22 L15 26 L4 40 Z M44 18 L60 13 L59 31 Z" fill="#fff"/><path d="M4 26 L12 28 L6 36 Z M48 19 L57 16 L56 27 Z" fill="#f2b0b8"/>
<ellipse cx="38" cy="62" rx="26" ry="26" fill="#fbe6ea"/>
<path d="M14 46 C22 34 36 30 50 36 C40 38 30 40 20 52 Z" fill="#2a2222"/>
<circle cx="21.8" cy="65.4" r="8" fill="#555" stroke="#111" stroke-width="1.2"/><circle cx="51.6" cy="64" r="8" fill="#555" stroke="#111" stroke-width="1.2"/>
<circle cx="22.5" cy="62.5" r="2.3" fill="#fff"/><circle cx="49.5" cy="61" r="2.3" fill="#fff"/>
<ellipse cx="37" cy="62" rx="6" ry="4" fill="#f4b8c4" opacity="0.7"/>
<path d="M32 74 L35 76 L38 74 L41 76" stroke="#333" stroke-width="0.8" fill="none"/>
<path d="M13 80 L30 84 L50 84 L64 78 L62 112 L48 120 L22 120 L14 112 Z" fill="#a8bee0"/>
<path d="M30 84 L48 84 L46 118 L32 118 Z" fill="#fbfbfb"/>
<path d="M28 120 h10 v6 h-10 Z M44 120 h10 v6 h-10 Z" fill="#f8e8ea"/>
<!-- girl2 -->
<path d="M62 48 C64 36 78 31 90 32 C104 33 114 42 116 56 L114 86 L64 86 Z" fill="#6c4848"/>
<path d="M64 42 C78 36 98 34 114 44" stroke="#70b0e0" stroke-width="3.5" fill="none" stroke-dasharray="4 3"/>
<path d="M66 44 C80 38 98 37 112 46" stroke="#e8a0b0" stroke-width="2" fill="none" stroke-dasharray="2 6"/>
<ellipse cx="89" cy="63" rx="19" ry="20" fill="#fde4e2"/>
<path d="M80 66 q3 -2 6 0 M92 66 q3 -2 6 0" stroke="#553" stroke-width="0.9" fill="none"/>
<path d="M70 82 L110 82 L106 96 L74 96 Z" fill="#fbd8d8"/>
<ellipse cx="108" cy="31" rx="6" ry="8" fill="#fbfbfb"/>
<text x="62" y="27" font-family="Liberation Sans" font-weight="700" font-style="italic" font-size="17" fill="#fff" stroke="#a8d0f0" stroke-width="0.8" transform="rotate(-6 62 27)">+100</text>
<!-- girl3 -->
<circle cx="134" cy="30" r="9" fill="#6e4a4a"/><circle cx="186" cy="33" r="9" fill="#6e4a4a"/>
<path d="M127 50 C126 34 142 26 160 26 C178 26 193 34 192 50 L190 82 L128 82 Z" fill="#6e4a4a"/>
<path d="M147 14 L160 24 L174 14 L172 26 L149 26 Z" fill="#e0e090"/>
<ellipse cx="159" cy="66" rx="26" ry="18" fill="#fde6e0"/>
<path d="M134 50 C146 44 172 44 186 52 L186 58 L134 58 Z" fill="#6e4a4a"/>
<circle cx="144.3" cy="66.9" r="10.5" fill="#fbe6e6" stroke="#666" stroke-width="1"/><circle cx="171.2" cy="68.3" r="10.5" fill="#fbe6e6" stroke="#666" stroke-width="1"/>
<circle cx="144.3" cy="67.5" r="6.5" fill="#333"/><circle cx="171.2" cy="69" r="6.5" fill="#333"/>
<circle cx="143" cy="65" r="2" fill="#fff"/><circle cx="170" cy="66" r="2" fill="#fff"/>
<path d="M140 84 L176 84 L172 102 L144 102 Z" fill="#f4f0c8"/>
<ellipse cx="175" cy="90" rx="10" ry="9" fill="#80b8e8"/><ellipse cx="175" cy="104" rx="9" ry="9" fill="#fbfbfb"/>
<circle cx="171" cy="90" r="1.6" fill="#222"/><circle cx="179" cy="90" r="1.6" fill="#222"/>
<rect x="149" y="110" width="21" height="24" rx="3" fill="#fbd0d8"/>
<path d="M146 124 L152 128 L146 132 Z" fill="#40a0e0"/>
<!-- girl4 -->
<path d="M190 46 C190 30 210 21 228 21 C244 21 248 30 248 34 V92 L232 86 L196 90 C190 78 192 60 190 46 Z" fill="#2c2422"/>
<ellipse cx="221" cy="64" rx="17" ry="21" fill="#c88a64"/>
<path d="M204 52 C212 44 232 44 240 50 L240 40 L204 40 Z" fill="#2c2422"/>
<ellipse cx="210" cy="68" rx="3" ry="2.5" fill="#222"/><ellipse cx="232" cy="68" rx="3" ry="2.5" fill="#222"/>
<ellipse cx="221" cy="80" rx="3.5" ry="2.5" fill="#f06050"/>
<path d="M194 86 L230 84 L229 108 L196 110 Z" fill="#d84848"/>
<path d="M206 88 L218 88 L218 112 L206 112 Z" fill="#2c2422"/>
<path d="M200 110 L226 110 L224 116 L202 116 Z" fill="#2c2422"/>
<!-- orange girl -->
<ellipse cx="90" cy="103" rx="11" ry="11" fill="#ff6a30"/>
<ellipse cx="91" cy="110" rx="7" ry="8" fill="#fde0dc"/>
<path d="M84 116 L98 116 L96 128 L86 128 Z" fill="#fbd8d8"/>
<!-- Baby text -->
<text x="89" y="104" font-family="Liberation Serif" font-weight="700" font-size="34" fill="#ffffff" stroke="#a8d4f4" stroke-width="1.3" textLength="75" lengthAdjust="spacingAndGlyphs">Baby</text>
<text x="112" y="121" font-family="Liberation Serif" font-weight="700" font-size="18" fill="#f090b0">idol</text>
</svg>
<svg class="a" style="left:934px;top:690px;background:#000" width="248" height="140" viewBox="0 0 248 140"><defs><linearGradient id="sky2" x1="0" y1="0" x2="0" y2="1"><stop offset="0" stop-color="#2f86dc"/><stop offset="0.35" stop-color="#5aa4e4"/><stop offset="0.6" stop-color="#a8d0f0"/><stop offset="0.85" stop-color="#e0f0fa"/></linearGradient>
<filter id="cb"><feGaussianBlur stdDeviation="3"/></filter></defs>
<rect width="248" height="140" fill="url(#sky2)"/>
<g fill="#fff" opacity="0.9" filter="url(#cb)">
<ellipse cx="15" cy="8" rx="22" ry="7"/><ellipse cx="55" cy="12" rx="10" ry="8"/><ellipse cx="60" cy="42" rx="22" ry="12"/><ellipse cx="75" cy="60" rx="20" ry="12"/>
<ellipse cx="110" cy="62" rx="24" ry="10"/><ellipse cx="150" cy="58" rx="18" ry="14"/><ellipse cx="165" cy="45" rx="12" ry="12"/><ellipse cx="170" cy="75" rx="16" ry="10"/>
<ellipse cx="70" cy="88" rx="26" ry="12"/><ellipse cx="120" cy="90" rx="28" ry="12"/><ellipse cx="165" cy="98" rx="18" ry="10"/><ellipse cx="95" cy="105" rx="40" ry="8"/><ellipse cx="160" cy="112" rx="30" ry="6"/></g>
<rect x="0" y="117.6" width="248" height="22.4" fill="#4cb82a"/>
<rect x="0" y="117" width="248" height="3" fill="#70c850"/>
<rect x="30" y="90" width="1.2" height="28" fill="#777"/>
<ellipse cx="42" cy="78" rx="9" ry="18" fill="#3a8a2a"/>
<path d="M0 45 L36 48 L40 96 L0 96 Z" fill="#111"/>
<path d="M0 46 L34 50 L36 92 L0 93 Z" fill="#29a528"/>
<path d="M0 93 L22 94 L14 140 L0 140 Z" fill="#111"/>
<path d="M2 128 L12 130 L12 138 L0 138 Z" fill="#b06020"/>
<path d="M4 18 C12 12 36 14 42 22 L42 40 L36 48 L8 48 L2 40 Z" fill="#111"/>
<path d="M8 30 L38 28 L38 44 L10 46 Z" fill="#e8c070"/>
<path d="M14 37 L26 40" stroke="#111" stroke-width="2.5"/>
<path d="M24 94 L40 96 L44 104 L30 106 Z" fill="#111"/><path d="M27 96 L38 98 L40 102 L30 103 Z" fill="#e8c070"/>
<path d="M91 0 L93 36 L147 36 L149 0 Z" fill="#f2f4f6" stroke="#111" stroke-width="1.5"/>
<path d="M104 0 L105 36 M118 2 L118 36 M131 0 L130 36 M93 9 H148 M94 19 H147 M94 28 H147" stroke="#222" stroke-width="1" fill="none"/>
<ellipse cx="119" cy="3" rx="8" ry="4" fill="#e0b060"/>
<path d="M90 36 L150 36 L147 43 L93 43 Z" fill="#888" stroke="#222" stroke-width="0.8"/>
<path d="M186.2 0 H248 V140 H223.2 L200 100 L180 60 L172.2 31.3 Z" fill="#7b7b7b"/>
<path d="M208 0 H248 V124 L236 112 L218 84 L210 60 L204 30 Z" fill="#a8a8a8"/>
<circle cx="218.8" cy="34" r="25" fill="#e4e4e4" stroke="#000" stroke-width="3.5"/>
<path d="M212 22 L226 18 L238 28 L236 46 L226 55 L214 54 L208 40 Z" fill="#000"/>
<path d="M214 40 C220 42 228 40 232 36" stroke="#e0b060" stroke-width="2" fill="none"/>
<text x="68" y="117" font-family="Liberation Sans" font-size="26" fill="#e2b49a" textLength="100" lengthAdjust="spacingAndGlyphs" opacity="0.9">baby Thief</text>
<text x="58" y="138.5" font-family="Liberation Sans" font-weight="700" font-size="11.5" fill="#e8c8b0" textLength="123" lengthAdjust="spacingAndGlyphs">by mahdi ghasemi</text>
</svg>
<svg class="a" style="left:1195px;top:690px;background:#000" width="84" height="140" viewBox="0 0 84 140"><rect width="84" height="140" fill="#000"/><rect x="40.2" y="57.5" width="17" height="6" fill="#00ff00"/></svg>
<!--/CARDS-->
<!-- labels -->
<div class="lbl" style="left:250px;top:391px">Downhill bike physics demo</div>
<div class="lbl" style="left:511px;top:391px;transform:scaleX(0.955);transform-origin:0 0">Space asteroids</div>
<div class="lbl" style="left:772px;top:391px">Game feel demo</div>
<div class="lbl" style="left:1033px;top:391px;transform:scaleX(0.97);transform-origin:0 0">Space shooter</div>
<div class="lbl" style="left:151px;top:839px;transform:scaleX(0.98);transform-origin:0 0">Blazing Inferno of Space</div>
<div class="lbl" style="left:412px;top:839px">Floresia I : Intemporel</div>
<div class="lbl" style="left:673px;top:839px">Baby Idol Girl</div>
<div class="lbl" style="left:934px;top:839px;transform:scaleX(0.97);transform-origin:0 0">Baby Thief</div>
<div class="lbl" style="left:1195px;top:839px">Brick Drop</div>
<!-- chevrons -->
<svg class="a" style="left:124px;top:309px" width="16" height="22" viewBox="0 0 16 22"><path d="M13 2 L4 11 L13 20" fill="none" stroke="#000" stroke-width="2.6"/></svg>
<svg class="a" style="left:1289px;top:309px" width="16" height="22" viewBox="0 0 16 22"><path d="M3 2 L12 11 L3 20" fill="none" stroke="#000" stroke-width="2.6"/></svg>
<svg class="a" style="left:1289px;top:534px" width="16" height="22" viewBox="0 0 16 22"><path d="M3 2 L12 11 L3 20" fill="none" stroke="#000" stroke-width="2.6"/></svg>
<svg class="a" style="left:1289px;top:757px" width="16" height="22" viewBox="0 0 16 22"><path d="M3 2 L12 11 L3 20" fill="none" stroke="#000" stroke-width="2.6"/></svg>
<!-- footer -->
<svg class="a" style="left:21.8px;top:900px" width="24" height="24" viewBox="0 0 24 24"><path d="M21 6h-2v9H6v2c0 .55.45 1 1 1h11l4 4V7c0-.55-.45-1-1-1zm-4 6V3c0-.55-.45-1-1-1H3c-.55 0-1 .45-1 1v14l4-4h10c.55 0 1-.45 1-1z" fill="#000"/></svg>
<div class="t" style="left:50px;top:906px;font-size:13px;color:#1a1a1a;transform:scaleX(0.955);transform-origin:0 0">COMMUNITY FORUMS</div>
<svg class="a" style="left:196px;top:900px" width="24" height="24" viewBox="0 0 24 24"><path d="M12 2C6.48 2 2 6.48 2 12s4.48 10 10 10 10-4.480 10-10S17.52 2 12 2zm1 17h-2v-2h2v2zm2.07-7.75l-.9.92C13.45 12.900 13 13.5 13 15h-2v-.5c0-1.1.45-2.1 1.17-2.83l1.24-1.26c.37-.36.59-.86.59-1.41 0-1.1-.9-2-2-2s-2 .9-2 2H8c0-2.21 1.79-4 4-4s4 1.79 4 4c0 .88-.36 1.68-.93 2.250z" fill="#000"/></svg>
<div class="t" style="left:224px;top:906px;font-size:13px;color:#1a1a1a;transform:scaleX(0.955);transform-origin:0 0">HELP AND DOCUMENTATION</div>

<!-- social -->
<svg class="a" style="left:1131px;top:901px" width="25" height="25" viewBox="0 0 25 25">
<rect x="1.5" y="1" width="22" height="22.5" rx="3.5" fill="#000"/>
<text x="12.5" y="10.5" font-family="Liberation Sans" font-weight="700" font-size="9" fill="#fff" text-anchor="middle" textLength="12" lengthAdjust="spacingAndGlyphs">You</text>
<rect x="4" y="12" width="17" height="9.5" rx="2.5" fill="#fff"/>
<text x="12.5" y="20" font-family="Liberation Sans" font-weight="700" font-size="8.5" fill="#000" text-anchor="middle" textLength="14" lengthAdjust="spacingAndGlyphs">Tube</text>
</svg>
<svg class="a" style="left:1179px;top:901px" width="25" height="26" viewBox="0 0 25 26">
<path d="M4 1 H21 C22.2 1 23 1.8 23 3 V24.5 L19.5 21 H4 C2.8 21 2 20.2 2 19 V3 C2 1.8 2.8 1 4 1 Z" fill="#000"/>
<path d="M6 14.5 C6 11 7.5 8.5 9 7.5 L11 7.2 L11.5 8 H13.5 L14 7.2 L16 7.5 C17.5 8.5 19 11 19 14.5 C18 15.6 16.5 16.2 15.5 16.3 L14.8 15.2 C13.5 15.5 11.5 15.5 10.2 15.2 L9.5 16.3 C8.5 16.2 7 15.6 6 14.5 Z" fill="#fff"/>
<circle cx="10.3" cy="12.3" r="1.3" fill="#000"/><circle cx="14.7" cy="12.3" r="1.3" fill="#000"/>
</svg>
<svg class="a" style="left:1226px;top:901px" width="24" height="24" viewBox="0 0 24 24">
<rect x="1.3" y="1" width="21" height="22" rx="4" fill="#000"/>
<ellipse cx="11.8" cy="14" rx="6.3" ry="4.3" fill="#fff"/>
<circle cx="5.8" cy="11.3" r="1.6" fill="#fff"/><circle cx="17.8" cy="11.3" r="1.6" fill="#fff"/>
<circle cx="16" cy="5.5" r="1.3" fill="#fff"/>
<path d="M11.8 9.5 L12.8 5 L16 5.5" stroke="#fff" stroke-width="0.9" fill="none"/>
<circle cx="9.5" cy="13.5" r="1.1" fill="#000"/><circle cx="14.1" cy="13.5" r="1.1" fill="#000"/>
</svg>
<svg class="a" style="left:1271px;top:901px" width="23" height="24" viewBox="0 0 23 24">
<rect x="0.8" y="1" width="20.6" height="22" rx="4" fill="#000"/>
<path d="M18 7.2 C17.4 7.5 16.8 7.6 16.2 7.7 C16.8 7.3 17.3 6.7 17.5 6 C16.9 6.4 16.3 6.6 15.6 6.8 C14.4 5.5 12.3 5.5 11.2 6.8 C10.5 7.6 10.3 8.6 10.5 9.5 C8.2 9.4 6.1 8.3 4.6 6.5 C3.9 7.8 4.3 9.5 5.5 10.3 C5 10.3 4.6 10.2 4.2 10 C4.2 11.4 5.2 12.6 6.5 12.9 C6.1 13 5.6 13 5.2 12.9 C5.6 14.1 6.7 14.9 7.9 14.9 C6.7 15.9 5.1 16.4 3.5 16.2 C8.3 19.2 15.5 16.8 16.3 9.5 C16.9 8.9 17.5 8.2 18 7.2 Z" fill="#fff"/>
</svg>
<svg class="a" style="left:1315px;top:901px" width="24" height="24" viewBox="0 0 24 24">
<rect x="1.3" y="1" width="20.7" height="22" rx="4" fill="#000"/>
<path d="M13.5 23 V14.5 H16.8 L17.2 11.2 H13.5 V9.2 C13.5 8.2 13.8 7.6 15.2 7.6 H17.3 V4.7 C16.9 4.6 15.8 4.5 14.6 4.5 C12 4.5 10.2 6.1 10.2 9 V11.2 H7.2 V14.5 H10.2 V23 Z" fill="#fff"/>
</svg>
<svg class="a" style="left:1360px;top:901px" width="22" height="22" viewBox="0 0 22 22">
<circle cx="11" cy="11" r="9.2" fill="none" stroke="#000" stroke-width="2"/>
<ellipse cx="11" cy="11" rx="4" ry="9.2" fill="none" stroke="#000" stroke-width="2"/>
<path d="M2.5 7.5 H19.5 M2.5 14.5 H19.5" stroke="#000" stroke-width="2"/>
</svg>
<div class="t" style="left:1387px;top:906px;font-size:13px;color:#1a1a2a;transform:scaleX(0.93);transform-origin:0 0">EN</div>
<!-- red annotation -->
<div class="a" style="left:1348px;top:890px;width:67px;height:40px;border:2px solid #f00"></div>
<svg class="a" style="left:0;top:0" width="1454" height="963" viewBox="0 0 1454 963" style="pointer-events:none">
<path d="M1134 705 L1342 866" stroke="#f00" stroke-width="2"/>
<path d="M1355 876 L1333 869 L1342 856 Z" fill="#f00"/>
</svg>

</body></html>
